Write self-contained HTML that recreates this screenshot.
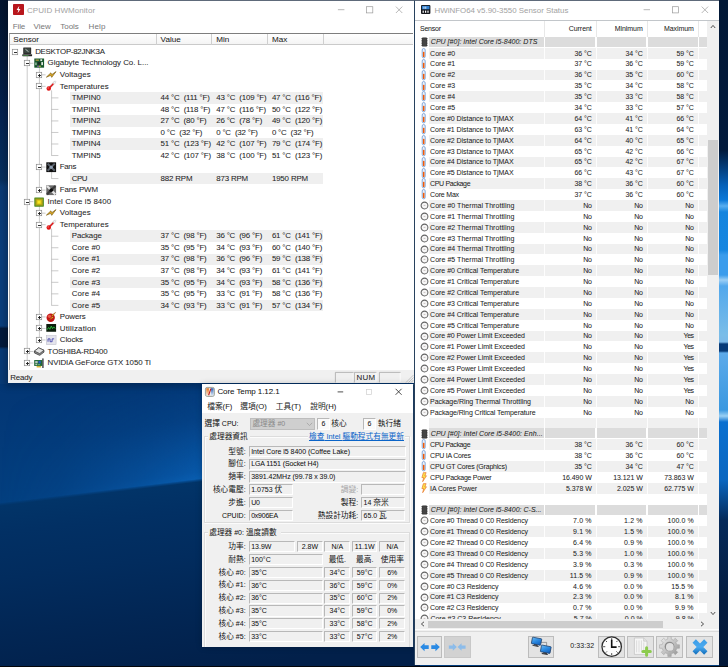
<!DOCTYPE html>
<html lang="zh-Hant"><head><meta charset="utf-8"><title>Sensors</title>
<style>
html,body{margin:0;padding:0;}
body{width:728px;height:667px;overflow:hidden;background:#03346c;font-family:"Liberation Sans","Noto Sans CJK TC",sans-serif;}
#root{position:relative;width:728px;height:667px;overflow:hidden;}
#root div{position:absolute;box-sizing:border-box;}
.t{white-space:pre;-webkit-text-stroke:0.05px currentColor;font-family:"Liberation Sans","Noto Sans CJK TC",sans-serif;}
.c{font-size:7.7px;-webkit-text-stroke:0;}
svg{position:absolute;overflow:visible;}
#bg{left:0;top:0;width:728px;height:667px;background:linear-gradient(180deg,#021a3c 0px,#022350 120px,#03306a 260px,#033674 383px,#033a79 440px,#033f7f 505px);}
#beam{left:0;top:383px;width:420px;height:284px;overflow:hidden;}
#beamhi{left:0;top:0;width:420px;height:140px;background:linear-gradient(173.1deg,rgba(10,100,190,0) 10px,rgba(10,100,190,0.22) 60px,rgba(12,110,205,0.6) 112px,rgba(14,116,210,0.75) 124px);-webkit-mask-image:linear-gradient(90deg,rgba(0,0,0,0.0),rgba(0,0,0,0.14) 60px,rgba(0,0,0,0.55) 140px,#000 215px);mask-image:linear-gradient(90deg,rgba(0,0,0,0.0),rgba(0,0,0,0.14) 60px,rgba(0,0,0,0.55) 140px,#000 215px);}
#beamlo{left:-60px;top:127.3px;width:620px;height:420px;transform-origin:0 0;transform:rotate(-6.9deg);background:linear-gradient(180deg,rgba(2,52,104,0) 0px,rgba(2,52,104,0.55) 1.5px,#023468 3.2px,#023064 30px,#022c5e 75px,#022654 130px,#02204a 190px);}
#rstrip{left:719px;top:0;width:9px;height:667px;background:linear-gradient(180deg,#021836 0px,#021a3c 150px,#0560b8 185px,#0a78d8 200px,#58aef0 206px,#1484de 212px,#1686e0 250px,#3a9cec 255px,#3a9cec 275px,#9ccff5 280px,#52a8ec 286px,#7abde8 335px,#7ab8e8 342px,#063a78 344px,#063a78 351px,#5caaea 353px,#3a98e0 410px,#9ad0f4 416px,#0a70d0 422px,#0a66c0 480px,#052a5a 520px,#041c40 600px,#031838 666px);}
#lstrip{left:0;top:0;width:8.6px;height:384px;background:linear-gradient(180deg,#03142e 0px,#041a3c 60px,#052452 120px,#07305f 180px,#0a3a74 187px,#0a3e7c 250px,#0a3e7c 326px,#031a3c 328.5px,#031a3c 346.5px,#083a76 349px,#083a76 384px);}
#botbar{left:0;top:665.7px;width:728px;height:2px;background:#04060a;}
.hw .t{-webkit-text-stroke:0.04px currentColor;}
.ct .t{-webkit-text-stroke:0.04px currentColor;}
.ct .c{-webkit-text-stroke:0;}

</style></head><body>
<div id="root">
<div id="bg"></div>
<div id="beam"><div id="beamhi"></div><div id="beamlo"></div></div>
<div id="rstrip"></div>
<div id="lstrip"></div>
<div id="botbar"></div>
<div style="left:5.20px;top:0.00px;width:412.10px;height:387.10px;background:rgba(0,0,0,0.22);filter:blur(3px);"></div>
<div style="left:8.20px;top:0.00px;width:406.10px;height:383.10px;background:#fff;border-top:0.8px solid #5e6a7a;"></div>
<svg style="left:13.2px;top:4.4px" width="11" height="11" viewBox="0 0 11 11"><rect x="0" y="0" width="11" height="11" rx="0.8" fill="#b8161c"/><path d="M6.3 1.8 L3.6 6 L5.4 6 L4.6 9.3 L7.5 4.9 L5.7 4.9 Z" fill="#fff"/></svg>
<div class="t" style="left:27.00px;top:4.60px;height:12px;line-height:12px;font-size:8.0px;color:#a2a2a2;letter-spacing:0.070px;-webkit-text-stroke:0;">CPUID HWMonitor</div>
<svg style="left:335px;top:4px" width="72" height="12" viewBox="0 0 72 12"><g stroke="#9a9a9a" stroke-width="0.7" fill="none"><path d="M2.9 5.7 H9.4"/><rect x="31.6" y="2.7" width="6.2" height="6.2"/><path d="M60.9 2.6 L67.3 9 M67.3 2.6 L60.9 9"/></g></svg>
<div class="t" style="left:12.80px;top:20.60px;height:12px;line-height:12px;font-size:8.0px;color:#777777;letter-spacing:-0.158px;-webkit-text-stroke:0;">File</div>
<div class="t" style="left:33.60px;top:20.60px;height:12px;line-height:12px;font-size:8.0px;color:#777777;letter-spacing:-0.014px;-webkit-text-stroke:0;">View</div>
<div class="t" style="left:60.30px;top:20.60px;height:12px;line-height:12px;font-size:8.0px;color:#777777;letter-spacing:-0.038px;-webkit-text-stroke:0;">Tools</div>
<div class="t" style="left:88.60px;top:20.60px;height:12px;line-height:12px;font-size:8.0px;color:#777777;letter-spacing:0.116px;-webkit-text-stroke:0;">Help</div>
<div style="left:9.30px;top:33.00px;width:403.30px;height:337.40px;background:#fff;border-top:1px solid #7e7e7e;border-left:1px solid #a4a4a4;"></div>
<div style="left:10.30px;top:34.00px;width:402.30px;height:11.40px;background:linear-gradient(180deg,#ffffff,#f4f4f4);border-bottom:1px solid #cacaca;"></div>
<div style="left:155.60px;top:34.20px;width:0.90px;height:10.60px;background:#cfcfcf;"></div>
<div style="left:211.40px;top:34.20px;width:0.90px;height:10.60px;background:#cfcfcf;"></div>
<div style="left:267.10px;top:34.20px;width:0.90px;height:10.60px;background:#cfcfcf;"></div>
<div style="left:322.90px;top:34.20px;width:0.90px;height:10.60px;background:#cfcfcf;"></div>
<div class="t" style="left:13.30px;top:34.30px;height:12px;line-height:12px;font-size:8.1px;color:#222;">Sensor</div>
<div class="t" style="left:160.60px;top:34.30px;height:12px;line-height:12px;font-size:8.1px;color:#222;">Value</div>
<div class="t" style="left:216.20px;top:34.30px;height:12px;line-height:12px;font-size:8.1px;color:#222;">Min</div>
<div class="t" style="left:271.90px;top:34.30px;height:12px;line-height:12px;font-size:8.1px;color:#222;">Max</div>
<div style="left:70.10px;top:92.11px;width:252.90px;height:11.53px;background:#efefef;"></div>
<div style="left:70.10px;top:115.17px;width:252.90px;height:11.53px;background:#efefef;"></div>
<div style="left:70.10px;top:138.22px;width:252.90px;height:11.53px;background:#efefef;"></div>
<div style="left:70.10px;top:172.81px;width:252.90px;height:11.53px;background:#efefef;"></div>
<div style="left:70.10px;top:230.45px;width:252.90px;height:11.53px;background:#efefef;"></div>
<div style="left:70.10px;top:253.50px;width:252.90px;height:11.53px;background:#efefef;"></div>
<div style="left:70.10px;top:276.56px;width:252.90px;height:11.53px;background:#efefef;"></div>
<div style="left:70.10px;top:299.62px;width:252.90px;height:11.53px;background:#efefef;"></div>
<svg style="left:0;top:0" width="420" height="384" viewBox="0 0 420 384"><path d="M27.20 55.76 V363.02 M39.40 67.29 V190.10 M39.40 205.63 V339.96 M51.60 90.35 V155.52 M51.60 171.04 V178.57 M51.60 228.68 V305.38 M26.90 63.29 H33.40 M39.10 74.82 H45.60 M39.10 86.35 H45.60 M51.30 97.88 H58.40 M51.30 109.40 H58.40 M51.30 120.93 H58.40 M51.30 132.46 H58.40 M51.30 143.99 H58.40 M51.30 155.52 H58.40 M39.10 167.04 H45.60 M51.30 178.57 H58.40 M39.10 190.10 H45.60 M26.90 201.63 H33.40 M39.10 213.16 H45.60 M39.10 224.68 H45.60 M51.30 236.21 H58.40 M51.30 247.74 H58.40 M51.30 259.27 H58.40 M51.30 270.80 H58.40 M51.30 282.32 H58.40 M51.30 293.85 H58.40 M51.30 305.38 H58.40 M39.10 316.91 H45.60 M39.10 328.44 H45.60 M39.10 339.96 H45.60 M26.90 351.49 H33.40 M26.90 363.02 H33.40" stroke="#b8b8b8" stroke-width="0.75" fill="none"/></svg>
<svg style="left:11.70px;top:48.76px" width="6" height="6" viewBox="0 0 6 6"><rect x="0.3" y="0.3" width="5.4" height="5.4" fill="#fff" stroke="#8a8a8a" stroke-width="0.7"/><path d="M1.5 3 H4.5" stroke="#1c1c1c" stroke-width="0.9" shape-rendering="crispEdges"/></svg>
<svg style="left:21.70px;top:46.66px" width="10.2" height="10.2" viewBox="0 0 10 10"><rect x="1.2" y="0.4" width="7.8" height="6.4" rx="0.5" fill="#2c2c2c"/><rect x="2.2" y="1.3" width="5.8" height="4.4" fill="#3d4a44"/><path d="M3.4 2.2 L6.4 4.6" stroke="#c8d0cc" stroke-width="0.9"/><rect x="0.3" y="7.1" width="9.6" height="2" rx="0.4" fill="#242424"/><rect x="1" y="8.2" width="5.4" height="0.7" fill="#58a858"/></svg>
<div class="t" style="left:35.20px;top:45.96px;height:12px;line-height:12px;font-size:7.9px;color:#1e1e1e;letter-spacing:-0.269px;">DESKTOP-82JNK3A</div>
<svg style="left:23.90px;top:60.29px" width="6" height="6" viewBox="0 0 6 6"><rect x="0.3" y="0.3" width="5.4" height="5.4" fill="#fff" stroke="#8a8a8a" stroke-width="0.7"/><path d="M1.5 3 H4.5" stroke="#1c1c1c" stroke-width="0.9" shape-rendering="crispEdges"/></svg>
<svg style="left:33.90px;top:58.19px" width="10.2" height="10.2" viewBox="0 0 10 10"><rect x="0.3" y="0.5" width="9.6" height="9" fill="#17572c"/><rect x="1.6" y="1.4" width="3.2" height="1.4" fill="#a89840"/><rect x="6.2" y="1.2" width="1.8" height="1.8" fill="#dfe8df"/><rect x="3.6" y="3.8" width="2.8" height="2.8" fill="#1c2a24"/><rect x="1.2" y="4.4" width="1.4" height="2.6" fill="#9fc0a8"/><rect x="7.2" y="4" width="1.6" height="3" fill="#e8efe8"/><rect x="3.2" y="7.6" width="1.6" height="1" fill="#b860d0"/><rect x="5" y="7.6" width="1.6" height="1" fill="#d8d040"/></svg>
<div class="t" style="left:47.60px;top:57.49px;height:12px;line-height:12px;font-size:7.9px;color:#1e1e1e;letter-spacing:-0.009px;">Gigabyte Technology Co. L...</div>
<svg style="left:36.10px;top:71.82px" width="6" height="6" viewBox="0 0 6 6"><rect x="0.3" y="0.3" width="5.4" height="5.4" fill="#fff" stroke="#8a8a8a" stroke-width="0.7"/><path d="M1.5 3 H4.5" stroke="#1c1c1c" stroke-width="0.9" shape-rendering="crispEdges"/><path d="M3 1.5 V4.5" stroke="#1c1c1c" stroke-width="0.9" shape-rendering="crispEdges"/></svg>
<svg style="left:46.10px;top:69.72px" width="10.2" height="10.2" viewBox="0 0 10 10"><path d="M0.4 7 L4.8 2.8 L5.6 4.6 L9.8 1.6 L5.6 7.2 L4.6 5.2 Z" fill="#e8b020" stroke="#7a5c10" stroke-width="0.7" stroke-linejoin="round"/></svg>
<div class="t" style="left:59.80px;top:69.02px;height:12px;line-height:12px;font-size:7.9px;color:#1e1e1e;letter-spacing:0.086px;">Voltages</div>
<svg style="left:36.10px;top:83.35px" width="6" height="6" viewBox="0 0 6 6"><rect x="0.3" y="0.3" width="5.4" height="5.4" fill="#fff" stroke="#8a8a8a" stroke-width="0.7"/><path d="M1.5 3 H4.5" stroke="#1c1c1c" stroke-width="0.9" shape-rendering="crispEdges"/></svg>
<svg style="left:46.10px;top:81.25px" width="10.2" height="10.2" viewBox="0 0 10 10"><path d="M8.9 0.9 L3.4 6.6" stroke="#c4c4c4" stroke-width="2.3" stroke-linecap="round"/><path d="M8.9 0.9 L3.4 6.6" stroke="#f4f4f4" stroke-width="1.5" stroke-linecap="round"/><path d="M6.8 3.1 L3.2 6.8" stroke="#e01818" stroke-width="1.5" stroke-linecap="round"/><circle cx="2.7" cy="7.4" r="2.2" fill="#e01414"/><circle cx="2.1" cy="6.8" r="0.6" fill="#ff9a9a"/></svg>
<div class="t" style="left:59.80px;top:80.55px;height:12px;line-height:12px;font-size:7.9px;color:#1e1e1e;letter-spacing:0.052px;">Temperatures</div>
<div class="t" style="left:71.80px;top:92.08px;height:12px;line-height:12px;font-size:7.9px;color:#1e1e1e;letter-spacing:0.003px;">TMPIN0</div>
<div class="t" style="left:160.60px;top:92.08px;height:12px;line-height:12px;font-size:7.9px;color:#1e1e1e;letter-spacing:-0.167px;">44 °C  (111 °F)</div>
<div class="t" style="left:216.20px;top:92.08px;height:12px;line-height:12px;font-size:7.9px;color:#1e1e1e;letter-spacing:-0.167px;">43 °C  (109 °F)</div>
<div class="t" style="left:271.90px;top:92.08px;height:12px;line-height:12px;font-size:7.9px;color:#1e1e1e;letter-spacing:-0.167px;">47 °C  (116 °F)</div>
<div class="t" style="left:71.80px;top:103.60px;height:12px;line-height:12px;font-size:7.9px;color:#1e1e1e;letter-spacing:0.003px;">TMPIN1</div>
<div class="t" style="left:160.60px;top:103.60px;height:12px;line-height:12px;font-size:7.9px;color:#1e1e1e;letter-spacing:-0.167px;">48 °C  (118 °F)</div>
<div class="t" style="left:216.20px;top:103.60px;height:12px;line-height:12px;font-size:7.9px;color:#1e1e1e;letter-spacing:-0.167px;">47 °C  (116 °F)</div>
<div class="t" style="left:271.90px;top:103.60px;height:12px;line-height:12px;font-size:7.9px;color:#1e1e1e;letter-spacing:-0.167px;">50 °C  (122 °F)</div>
<div class="t" style="left:71.80px;top:115.13px;height:12px;line-height:12px;font-size:7.9px;color:#1e1e1e;letter-spacing:0.003px;">TMPIN2</div>
<div class="t" style="left:160.60px;top:115.13px;height:12px;line-height:12px;font-size:7.9px;color:#1e1e1e;letter-spacing:-0.175px;">27 °C  (80 °F)</div>
<div class="t" style="left:216.20px;top:115.13px;height:12px;line-height:12px;font-size:7.9px;color:#1e1e1e;letter-spacing:-0.175px;">26 °C  (78 °F)</div>
<div class="t" style="left:271.90px;top:115.13px;height:12px;line-height:12px;font-size:7.9px;color:#1e1e1e;letter-spacing:-0.167px;">49 °C  (120 °F)</div>
<div class="t" style="left:71.80px;top:126.66px;height:12px;line-height:12px;font-size:7.9px;color:#1e1e1e;letter-spacing:0.003px;">TMPIN3</div>
<div class="t" style="left:160.60px;top:126.66px;height:12px;line-height:12px;font-size:7.9px;color:#1e1e1e;letter-spacing:-0.185px;">0 °C  (32 °F)</div>
<div class="t" style="left:216.20px;top:126.66px;height:12px;line-height:12px;font-size:7.9px;color:#1e1e1e;letter-spacing:-0.185px;">0 °C  (32 °F)</div>
<div class="t" style="left:271.90px;top:126.66px;height:12px;line-height:12px;font-size:7.9px;color:#1e1e1e;letter-spacing:-0.185px;">0 °C  (32 °F)</div>
<div class="t" style="left:71.80px;top:138.19px;height:12px;line-height:12px;font-size:7.9px;color:#1e1e1e;letter-spacing:0.003px;">TMPIN4</div>
<div class="t" style="left:160.60px;top:138.19px;height:12px;line-height:12px;font-size:7.9px;color:#1e1e1e;letter-spacing:-0.167px;">51 °C  (123 °F)</div>
<div class="t" style="left:216.20px;top:138.19px;height:12px;line-height:12px;font-size:7.9px;color:#1e1e1e;letter-spacing:-0.167px;">42 °C  (107 °F)</div>
<div class="t" style="left:271.90px;top:138.19px;height:12px;line-height:12px;font-size:7.9px;color:#1e1e1e;letter-spacing:-0.167px;">79 °C  (174 °F)</div>
<div class="t" style="left:71.80px;top:149.72px;height:12px;line-height:12px;font-size:7.9px;color:#1e1e1e;letter-spacing:0.003px;">TMPIN5</div>
<div class="t" style="left:160.60px;top:149.72px;height:12px;line-height:12px;font-size:7.9px;color:#1e1e1e;letter-spacing:-0.167px;">42 °C  (107 °F)</div>
<div class="t" style="left:216.20px;top:149.72px;height:12px;line-height:12px;font-size:7.9px;color:#1e1e1e;letter-spacing:-0.167px;">38 °C  (100 °F)</div>
<div class="t" style="left:271.90px;top:149.72px;height:12px;line-height:12px;font-size:7.9px;color:#1e1e1e;letter-spacing:-0.167px;">51 °C  (123 °F)</div>
<svg style="left:36.10px;top:164.04px" width="6" height="6" viewBox="0 0 6 6"><rect x="0.3" y="0.3" width="5.4" height="5.4" fill="#fff" stroke="#8a8a8a" stroke-width="0.7"/><path d="M1.5 3 H4.5" stroke="#1c1c1c" stroke-width="0.9" shape-rendering="crispEdges"/></svg>
<svg style="left:46.10px;top:161.94px" width="10.2" height="10.2" viewBox="0 0 10 10"><rect x="0.3" y="0.3" width="9.6" height="9.6" fill="#101010"/><path d="M1.6 1.6 L8.6 8.6 M8.6 1.6 L1.6 8.6" stroke="#59606a" stroke-width="2"/><path d="M5.1 0.8 V9.4 M0.8 5.1 H9.4" stroke="#101010" stroke-width="1.1"/><circle cx="5.1" cy="5.1" r="1.7" fill="#8c9cb0"/></svg>
<div class="t" style="left:59.80px;top:161.24px;height:12px;line-height:12px;font-size:7.9px;color:#1e1e1e;letter-spacing:-0.320px;">Fans</div>
<div class="t" style="left:71.80px;top:172.77px;height:12px;line-height:12px;font-size:7.9px;color:#1e1e1e;letter-spacing:-0.460px;">CPU</div>
<div class="t" style="left:160.60px;top:172.77px;height:12px;line-height:12px;font-size:7.9px;color:#1e1e1e;letter-spacing:-0.165px;">882 RPM</div>
<div class="t" style="left:216.20px;top:172.77px;height:12px;line-height:12px;font-size:7.9px;color:#1e1e1e;letter-spacing:-0.165px;">873 RPM</div>
<div class="t" style="left:271.90px;top:172.77px;height:12px;line-height:12px;font-size:7.9px;color:#1e1e1e;letter-spacing:-0.151px;">1950 RPM</div>
<svg style="left:36.10px;top:187.10px" width="6" height="6" viewBox="0 0 6 6"><rect x="0.3" y="0.3" width="5.4" height="5.4" fill="#fff" stroke="#8a8a8a" stroke-width="0.7"/><path d="M1.5 3 H4.5" stroke="#1c1c1c" stroke-width="0.9" shape-rendering="crispEdges"/><path d="M3 1.5 V4.5" stroke="#1c1c1c" stroke-width="0.9" shape-rendering="crispEdges"/></svg>
<svg style="left:46.10px;top:185.00px" width="10.2" height="10.2" viewBox="0 0 10 10"><rect x="0.3" y="0.3" width="9.6" height="9.6" fill="#6c6c6c"/><path d="M1 1 L9.2 9.2" stroke="#e4e4e4" stroke-width="2.2"/><path d="M9.2 1 L1 9.2" stroke="#3c3c3c" stroke-width="2.2"/><circle cx="5.1" cy="5.1" r="1.8" fill="#0c0c0c"/></svg>
<div class="t" style="left:59.80px;top:184.30px;height:12px;line-height:12px;font-size:7.9px;color:#1e1e1e;letter-spacing:-0.116px;">Fans PWM</div>
<svg style="left:23.90px;top:198.63px" width="6" height="6" viewBox="0 0 6 6"><rect x="0.3" y="0.3" width="5.4" height="5.4" fill="#fff" stroke="#8a8a8a" stroke-width="0.7"/><path d="M1.5 3 H4.5" stroke="#1c1c1c" stroke-width="0.9" shape-rendering="crispEdges"/></svg>
<svg style="left:33.90px;top:196.53px" width="10.2" height="10.2" viewBox="0 0 10 10"><rect x="0.3" y="0.5" width="9.4" height="9" rx="0.6" fill="#4c8a20"/><rect x="1.3" y="1.5" width="7.4" height="7" fill="#a8a018"/><rect x="2.6" y="2.8" width="4.8" height="4.4" fill="#d8c418"/><rect x="3.6" y="3.7" width="2.8" height="2.6" fill="#fbe620"/></svg>
<div class="t" style="left:47.60px;top:195.83px;height:12px;line-height:12px;font-size:7.9px;color:#1e1e1e;letter-spacing:0.075px;">Intel Core i5 8400</div>
<svg style="left:36.10px;top:210.16px" width="6" height="6" viewBox="0 0 6 6"><rect x="0.3" y="0.3" width="5.4" height="5.4" fill="#fff" stroke="#8a8a8a" stroke-width="0.7"/><path d="M1.5 3 H4.5" stroke="#1c1c1c" stroke-width="0.9" shape-rendering="crispEdges"/><path d="M3 1.5 V4.5" stroke="#1c1c1c" stroke-width="0.9" shape-rendering="crispEdges"/></svg>
<svg style="left:46.10px;top:208.06px" width="10.2" height="10.2" viewBox="0 0 10 10"><path d="M0.4 7 L4.8 2.8 L5.6 4.6 L9.8 1.6 L5.6 7.2 L4.6 5.2 Z" fill="#e8b020" stroke="#7a5c10" stroke-width="0.7" stroke-linejoin="round"/></svg>
<div class="t" style="left:59.80px;top:207.36px;height:12px;line-height:12px;font-size:7.9px;color:#1e1e1e;letter-spacing:0.086px;">Voltages</div>
<svg style="left:36.10px;top:221.68px" width="6" height="6" viewBox="0 0 6 6"><rect x="0.3" y="0.3" width="5.4" height="5.4" fill="#fff" stroke="#8a8a8a" stroke-width="0.7"/><path d="M1.5 3 H4.5" stroke="#1c1c1c" stroke-width="0.9" shape-rendering="crispEdges"/></svg>
<svg style="left:46.10px;top:219.58px" width="10.2" height="10.2" viewBox="0 0 10 10"><path d="M8.9 0.9 L3.4 6.6" stroke="#c4c4c4" stroke-width="2.3" stroke-linecap="round"/><path d="M8.9 0.9 L3.4 6.6" stroke="#f4f4f4" stroke-width="1.5" stroke-linecap="round"/><path d="M6.8 3.1 L3.2 6.8" stroke="#e01818" stroke-width="1.5" stroke-linecap="round"/><circle cx="2.7" cy="7.4" r="2.2" fill="#e01414"/><circle cx="2.1" cy="6.8" r="0.6" fill="#ff9a9a"/></svg>
<div class="t" style="left:59.80px;top:218.88px;height:12px;line-height:12px;font-size:7.9px;color:#1e1e1e;letter-spacing:0.052px;">Temperatures</div>
<div class="t" style="left:71.80px;top:230.41px;height:12px;line-height:12px;font-size:7.9px;color:#1e1e1e;letter-spacing:-0.118px;">Package</div>
<div class="t" style="left:160.60px;top:230.41px;height:12px;line-height:12px;font-size:7.9px;color:#1e1e1e;letter-spacing:-0.175px;">37 °C  (98 °F)</div>
<div class="t" style="left:216.20px;top:230.41px;height:12px;line-height:12px;font-size:7.9px;color:#1e1e1e;letter-spacing:-0.175px;">36 °C  (96 °F)</div>
<div class="t" style="left:271.90px;top:230.41px;height:12px;line-height:12px;font-size:7.9px;color:#1e1e1e;letter-spacing:-0.167px;">61 °C  (141 °F)</div>
<div class="t" style="left:71.80px;top:241.94px;height:12px;line-height:12px;font-size:7.9px;color:#1e1e1e;letter-spacing:0.061px;">Core #0</div>
<div class="t" style="left:160.60px;top:241.94px;height:12px;line-height:12px;font-size:7.9px;color:#1e1e1e;letter-spacing:-0.175px;">35 °C  (95 °F)</div>
<div class="t" style="left:216.20px;top:241.94px;height:12px;line-height:12px;font-size:7.9px;color:#1e1e1e;letter-spacing:-0.175px;">34 °C  (93 °F)</div>
<div class="t" style="left:271.90px;top:241.94px;height:12px;line-height:12px;font-size:7.9px;color:#1e1e1e;letter-spacing:-0.167px;">60 °C  (140 °F)</div>
<div class="t" style="left:71.80px;top:253.47px;height:12px;line-height:12px;font-size:7.9px;color:#1e1e1e;letter-spacing:0.061px;">Core #1</div>
<div class="t" style="left:160.60px;top:253.47px;height:12px;line-height:12px;font-size:7.9px;color:#1e1e1e;letter-spacing:-0.175px;">37 °C  (98 °F)</div>
<div class="t" style="left:216.20px;top:253.47px;height:12px;line-height:12px;font-size:7.9px;color:#1e1e1e;letter-spacing:-0.175px;">36 °C  (96 °F)</div>
<div class="t" style="left:271.90px;top:253.47px;height:12px;line-height:12px;font-size:7.9px;color:#1e1e1e;letter-spacing:-0.167px;">59 °C  (138 °F)</div>
<div class="t" style="left:71.80px;top:265.00px;height:12px;line-height:12px;font-size:7.9px;color:#1e1e1e;letter-spacing:0.061px;">Core #2</div>
<div class="t" style="left:160.60px;top:265.00px;height:12px;line-height:12px;font-size:7.9px;color:#1e1e1e;letter-spacing:-0.175px;">37 °C  (98 °F)</div>
<div class="t" style="left:216.20px;top:265.00px;height:12px;line-height:12px;font-size:7.9px;color:#1e1e1e;letter-spacing:-0.175px;">34 °C  (93 °F)</div>
<div class="t" style="left:271.90px;top:265.00px;height:12px;line-height:12px;font-size:7.9px;color:#1e1e1e;letter-spacing:-0.167px;">61 °C  (141 °F)</div>
<div class="t" style="left:71.80px;top:276.52px;height:12px;line-height:12px;font-size:7.9px;color:#1e1e1e;letter-spacing:0.061px;">Core #3</div>
<div class="t" style="left:160.60px;top:276.52px;height:12px;line-height:12px;font-size:7.9px;color:#1e1e1e;letter-spacing:-0.175px;">35 °C  (95 °F)</div>
<div class="t" style="left:216.20px;top:276.52px;height:12px;line-height:12px;font-size:7.9px;color:#1e1e1e;letter-spacing:-0.175px;">34 °C  (93 °F)</div>
<div class="t" style="left:271.90px;top:276.52px;height:12px;line-height:12px;font-size:7.9px;color:#1e1e1e;letter-spacing:-0.167px;">58 °C  (136 °F)</div>
<div class="t" style="left:71.80px;top:288.05px;height:12px;line-height:12px;font-size:7.9px;color:#1e1e1e;letter-spacing:0.061px;">Core #4</div>
<div class="t" style="left:160.60px;top:288.05px;height:12px;line-height:12px;font-size:7.9px;color:#1e1e1e;letter-spacing:-0.175px;">35 °C  (95 °F)</div>
<div class="t" style="left:216.20px;top:288.05px;height:12px;line-height:12px;font-size:7.9px;color:#1e1e1e;letter-spacing:-0.175px;">33 °C  (91 °F)</div>
<div class="t" style="left:271.90px;top:288.05px;height:12px;line-height:12px;font-size:7.9px;color:#1e1e1e;letter-spacing:-0.167px;">58 °C  (136 °F)</div>
<div class="t" style="left:71.80px;top:299.58px;height:12px;line-height:12px;font-size:7.9px;color:#1e1e1e;letter-spacing:0.061px;">Core #5</div>
<div class="t" style="left:160.60px;top:299.58px;height:12px;line-height:12px;font-size:7.9px;color:#1e1e1e;letter-spacing:-0.175px;">34 °C  (93 °F)</div>
<div class="t" style="left:216.20px;top:299.58px;height:12px;line-height:12px;font-size:7.9px;color:#1e1e1e;letter-spacing:-0.175px;">33 °C  (91 °F)</div>
<div class="t" style="left:271.90px;top:299.58px;height:12px;line-height:12px;font-size:7.9px;color:#1e1e1e;letter-spacing:-0.167px;">57 °C  (134 °F)</div>
<svg style="left:36.10px;top:313.91px" width="6" height="6" viewBox="0 0 6 6"><rect x="0.3" y="0.3" width="5.4" height="5.4" fill="#fff" stroke="#8a8a8a" stroke-width="0.7"/><path d="M1.5 3 H4.5" stroke="#1c1c1c" stroke-width="0.9" shape-rendering="crispEdges"/><path d="M3 1.5 V4.5" stroke="#1c1c1c" stroke-width="0.9" shape-rendering="crispEdges"/></svg>
<svg style="left:46.10px;top:311.81px" width="10.2" height="10.2" viewBox="0 0 10 10"><circle cx="4.6" cy="5.6" r="4.1" fill="#c41414"/><circle cx="3.4" cy="4.2" r="1.6" fill="#e85a4a"/><path d="M9.4 0.4 L5.4 3.2 L6.6 4.2 L2.6 8.2 L7.4 5.4 L6.2 4.4 Z" fill="#f8c828" stroke="#8a3a08" stroke-width="0.45" stroke-linejoin="round"/></svg>
<div class="t" style="left:59.80px;top:311.11px;height:12px;line-height:12px;font-size:7.9px;color:#1e1e1e;letter-spacing:-0.068px;">Powers</div>
<svg style="left:36.10px;top:325.44px" width="6" height="6" viewBox="0 0 6 6"><rect x="0.3" y="0.3" width="5.4" height="5.4" fill="#fff" stroke="#8a8a8a" stroke-width="0.7"/><path d="M1.5 3 H4.5" stroke="#1c1c1c" stroke-width="0.9" shape-rendering="crispEdges"/><path d="M3 1.5 V4.5" stroke="#1c1c1c" stroke-width="0.9" shape-rendering="crispEdges"/></svg>
<svg style="left:46.10px;top:323.34px" width="10.2" height="10.2" viewBox="0 0 10 10"><rect x="0.3" y="1" width="9.6" height="7.6" fill="#0c1c0c"/><path d="M1 6.6 L2.6 4.4 L3.8 6.2 L5.2 3 L6.4 5.6 L7.6 3.8 L9 5.4" stroke="#30d040" stroke-width="0.8" fill="none"/></svg>
<div class="t" style="left:59.80px;top:322.64px;height:12px;line-height:12px;font-size:7.9px;color:#1e1e1e;letter-spacing:0.200px;">Utilization</div>
<svg style="left:36.10px;top:336.96px" width="6" height="6" viewBox="0 0 6 6"><rect x="0.3" y="0.3" width="5.4" height="5.4" fill="#fff" stroke="#8a8a8a" stroke-width="0.7"/><path d="M1.5 3 H4.5" stroke="#1c1c1c" stroke-width="0.9" shape-rendering="crispEdges"/><path d="M3 1.5 V4.5" stroke="#1c1c1c" stroke-width="0.9" shape-rendering="crispEdges"/></svg>
<svg style="left:46.10px;top:334.86px" width="10.2" height="10.2" viewBox="0 0 10 10"><rect x="0.3" y="0.6" width="9.6" height="8.8" fill="#e4e4ec" stroke="#b8b8c4" stroke-width="0.5"/><path d="M2 6.6 V3.8 H4 V6.6 H6 V3.8 H8" stroke="#3838a8" stroke-width="0.8" fill="none"/></svg>
<div class="t" style="left:59.80px;top:334.16px;height:12px;line-height:12px;font-size:7.9px;color:#1e1e1e;letter-spacing:-0.082px;">Clocks</div>
<svg style="left:23.90px;top:348.49px" width="6" height="6" viewBox="0 0 6 6"><rect x="0.3" y="0.3" width="5.4" height="5.4" fill="#fff" stroke="#8a8a8a" stroke-width="0.7"/><path d="M1.5 3 H4.5" stroke="#1c1c1c" stroke-width="0.9" shape-rendering="crispEdges"/><path d="M3 1.5 V4.5" stroke="#1c1c1c" stroke-width="0.9" shape-rendering="crispEdges"/></svg>
<svg style="left:33.90px;top:346.39px" width="10.2" height="10.2" viewBox="0 0 10 10"><path d="M0.4 5 L4.6 1.8 L9.8 4.2 L9.8 6 L5.6 9.2 L0.4 6.8 Z" fill="#8e8e8e" stroke="#2e2e2e" stroke-width="0.7" stroke-linejoin="round"/><path d="M0.4 5 L4.6 1.8 L9.8 4.2 L5.6 7.4 Z" fill="#e6e6e6" stroke="#2e2e2e" stroke-width="0.6" stroke-linejoin="round"/></svg>
<div class="t" style="left:47.60px;top:345.69px;height:12px;line-height:12px;font-size:7.9px;color:#1e1e1e;letter-spacing:-0.145px;">TOSHIBA-RD400</div>
<svg style="left:23.90px;top:360.02px" width="6" height="6" viewBox="0 0 6 6"><rect x="0.3" y="0.3" width="5.4" height="5.4" fill="#fff" stroke="#8a8a8a" stroke-width="0.7"/><path d="M1.5 3 H4.5" stroke="#1c1c1c" stroke-width="0.9" shape-rendering="crispEdges"/><path d="M3 1.5 V4.5" stroke="#1c1c1c" stroke-width="0.9" shape-rendering="crispEdges"/></svg>
<svg style="left:33.90px;top:357.92px" width="10.2" height="10.2" viewBox="0 0 10 10"><rect x="0.2" y="2" width="8.2" height="5.8" fill="#1f6a34"/><rect x="1.2" y="3" width="2.4" height="2.2" fill="#b8c8c0"/><rect x="4.4" y="2.8" width="2.2" height="2.6" fill="#2a58c8"/><rect x="1.4" y="5.8" width="1.4" height="1.2" fill="#d8d8d8"/><rect x="3.4" y="6" width="2.6" height="1" fill="#6aa878"/><rect x="8" y="0.4" width="1.5" height="9.4" fill="#505458"/><rect x="2.6" y="7.8" width="4.4" height="1.5" fill="#d8b838"/></svg>
<div class="t" style="left:47.60px;top:357.22px;height:12px;line-height:12px;font-size:7.9px;color:#1e1e1e;letter-spacing:-0.087px;">NVIDIA GeForce GTX 1050 Ti</div>
<div style="left:8.20px;top:370.40px;width:406.10px;height:12.70px;background:#f0f0f0;"></div>
<div class="t" style="left:10.30px;top:372.10px;height:12px;line-height:12px;font-size:7.9px;color:#222;letter-spacing:-0.138px;">Ready</div>
<svg style="left:334.60px;top:372.3px" width="18.60" height="10.4" viewBox="0 0 18.60 10.4"><path d="M0.4 10.4 V0.4 H18.60" stroke="#a8a8a8" stroke-width="0.8" fill="none"/><path d="M18.20 0.8 V10 H0.8" stroke="#fff" stroke-width="0.8" fill="none"/></svg>
<svg style="left:354.40px;top:372.3px" width="22.40" height="10.4" viewBox="0 0 22.40 10.4"><path d="M0.4 10.4 V0.4 H22.40" stroke="#a8a8a8" stroke-width="0.8" fill="none"/><path d="M22.00 0.8 V10 H0.8" stroke="#fff" stroke-width="0.8" fill="none"/></svg>
<svg style="left:379.40px;top:372.3px" width="21.60" height="10.4" viewBox="0 0 21.60 10.4"><path d="M0.4 10.4 V0.4 H21.60" stroke="#a8a8a8" stroke-width="0.8" fill="none"/><path d="M21.20 0.8 V10 H0.8" stroke="#fff" stroke-width="0.8" fill="none"/></svg>
<div class="t" style="left:356.40px;top:372.10px;height:12px;line-height:12px;font-size:7.9px;color:#222;letter-spacing:0.379px;">NUM</div>
<svg style="left:404.5px;top:373.8px" width="9" height="9" viewBox="0 0 9 9"><g stroke="#b4b4b4" stroke-width="0.7"><path d="M8.5 1 L1 8.5 M8.5 3.5 L3.5 8.5 M8.5 6 L6 8.5"/></g></svg>
<div class="hw" style="left:0;top:0;width:728px;height:667px;">
<div style="left:414.30px;top:0.00px;width:305.10px;height:665.30px;background:#fff;border-top:0.8px solid #5e6a7a;border-left:1.2px solid #28425e;"></div>
<svg style="left:420.7px;top:5.2px" width="9.4" height="9" viewBox="0 0 9.4 9"><rect x="0" y="0" width="9.4" height="9" rx="1" fill="#15171c"/><rect x="0.9" y="0.9" width="7.6" height="3.4" fill="#2f7fd0"/><rect x="2.6" y="1.6" width="0.8" height="2.2" fill="#fff"/><rect x="4.4" y="1.6" width="0.8" height="2.2" fill="#fff"/><rect x="1.6" y="5.6" width="1.2" height="2.2" fill="#fff"/><rect x="4" y="5.6" width="1.2" height="2.2" fill="#fff"/><rect x="6.4" y="5.6" width="1.2" height="2.2" fill="#fff"/></svg>
<div class="t" style="left:434.60px;top:4.50px;height:12px;line-height:12px;font-size:7.9px;color:#a2a2a2;letter-spacing:-0.001px;-webkit-text-stroke:0;">HWiNFO64 v5.90-3550 Sensor Status</div>
<svg style="left:640px;top:4px" width="72" height="12" viewBox="0 0 72 12"><g stroke="#9a9a9a" stroke-width="0.7" fill="none"><path d="M3.6 5.7 H10"/><rect x="32.4" y="2.7" width="6.2" height="6.2"/><path d="M61.7 2.6 L68.1 9 M68.1 2.6 L61.7 9"/></g></svg>
<div style="left:415.40px;top:20.30px;width:304.00px;height:16.40px;background:#fff;border-top:1px solid #c2c6ca;"></div>
<div style="left:544.00px;top:21.20px;width:0.90px;height:15.40px;background:#e8e8e8;"></div>
<div style="left:595.60px;top:21.20px;width:0.90px;height:15.40px;background:#e8e8e8;"></div>
<div style="left:646.60px;top:21.20px;width:0.90px;height:15.40px;background:#e8e8e8;"></div>
<div style="left:697.90px;top:21.20px;width:0.90px;height:15.40px;background:#e8e8e8;"></div>
<div class="t" style="left:420.00px;top:23.00px;height:12px;line-height:12px;font-size:7.0px;color:#222;letter-spacing:-0.227px;">Sensor</div>
<div class="t" style="right:136.30px;top:23.00px;height:12px;line-height:12px;font-size:7.0px;color:#222;letter-spacing:-0.056px;">Current</div>
<div class="t" style="right:85.30px;top:23.00px;height:12px;line-height:12px;font-size:7.0px;color:#222;letter-spacing:-0.056px;">Minimum</div>
<div class="t" style="right:34.30px;top:23.00px;height:12px;line-height:12px;font-size:7.0px;color:#222;letter-spacing:-0.099px;">Maximum</div>
<div style="left:415.40px;top:36.7px;width:292.00px;height:582.00px;overflow:hidden;background:#fff;"></div>
<div style="left:429.30px;top:36.90px;width:278.10px;height:9.98px;background:#dcdcdc;"></div>
<div style="left:429.30px;top:47.78px;width:278.10px;height:10.88px;background:#f0f0f0;"></div>
<div style="left:429.30px;top:69.53px;width:278.10px;height:10.88px;background:#f0f0f0;"></div>
<div style="left:429.30px;top:91.28px;width:278.10px;height:10.88px;background:#f0f0f0;"></div>
<div style="left:429.30px;top:113.04px;width:278.10px;height:10.88px;background:#f0f0f0;"></div>
<div style="left:429.30px;top:134.79px;width:278.10px;height:10.88px;background:#f0f0f0;"></div>
<div style="left:429.30px;top:156.55px;width:278.10px;height:10.88px;background:#f0f0f0;"></div>
<div style="left:429.30px;top:178.30px;width:278.10px;height:10.88px;background:#f0f0f0;"></div>
<div style="left:429.30px;top:200.06px;width:278.10px;height:10.88px;background:#f0f0f0;"></div>
<div style="left:429.30px;top:221.81px;width:278.10px;height:10.88px;background:#f0f0f0;"></div>
<div style="left:429.30px;top:243.56px;width:278.10px;height:10.88px;background:#f0f0f0;"></div>
<div style="left:429.30px;top:265.32px;width:278.10px;height:10.88px;background:#f0f0f0;"></div>
<div style="left:429.30px;top:287.07px;width:278.10px;height:10.88px;background:#f0f0f0;"></div>
<div style="left:429.30px;top:308.82px;width:278.10px;height:10.88px;background:#f0f0f0;"></div>
<div style="left:429.30px;top:330.58px;width:278.10px;height:10.88px;background:#f0f0f0;"></div>
<div style="left:429.30px;top:352.33px;width:278.10px;height:10.88px;background:#f0f0f0;"></div>
<div style="left:429.30px;top:374.09px;width:278.10px;height:10.88px;background:#f0f0f0;"></div>
<div style="left:429.30px;top:395.84px;width:278.10px;height:10.88px;background:#f0f0f0;"></div>
<div style="left:429.30px;top:417.60px;width:278.10px;height:10.88px;background:#f0f0f0;"></div>
<div style="left:429.30px;top:428.47px;width:278.10px;height:9.98px;background:#dcdcdc;"></div>
<div style="left:429.30px;top:439.35px;width:278.10px;height:10.88px;background:#f0f0f0;"></div>
<div style="left:429.30px;top:461.10px;width:278.10px;height:10.88px;background:#f0f0f0;"></div>
<div style="left:429.30px;top:482.86px;width:278.10px;height:10.88px;background:#f0f0f0;"></div>
<div style="left:429.30px;top:504.61px;width:278.10px;height:9.98px;background:#dcdcdc;"></div>
<div style="left:429.30px;top:526.37px;width:278.10px;height:10.88px;background:#f0f0f0;"></div>
<div style="left:429.30px;top:548.12px;width:278.10px;height:10.88px;background:#f0f0f0;"></div>
<div style="left:429.30px;top:569.87px;width:278.10px;height:10.88px;background:#f0f0f0;"></div>
<div style="left:429.30px;top:591.63px;width:278.10px;height:10.88px;background:#f0f0f0;"></div>
<div style="left:429.30px;top:613.38px;width:278.10px;height:5.32px;background:#f0f0f0;"></div>
<div style="left:544.00px;top:36.70px;width:0.80px;height:582.00px;background:rgba(255,255,255,0.85);"></div>
<div style="left:543.60px;top:36.90px;width:1.70px;height:10.88px;background:#fff;"></div>
<div style="left:543.60px;top:428.47px;width:1.70px;height:10.88px;background:#fff;"></div>
<div style="left:543.60px;top:504.61px;width:1.70px;height:10.88px;background:#fff;"></div>
<div style="left:595.60px;top:36.70px;width:0.80px;height:582.00px;background:rgba(255,255,255,0.85);"></div>
<div style="left:595.20px;top:36.90px;width:1.70px;height:10.88px;background:#fff;"></div>
<div style="left:595.20px;top:428.47px;width:1.70px;height:10.88px;background:#fff;"></div>
<div style="left:595.20px;top:504.61px;width:1.70px;height:10.88px;background:#fff;"></div>
<div style="left:646.60px;top:36.70px;width:0.80px;height:582.00px;background:rgba(255,255,255,0.85);"></div>
<div style="left:646.20px;top:36.90px;width:1.70px;height:10.88px;background:#fff;"></div>
<div style="left:646.20px;top:428.47px;width:1.70px;height:10.88px;background:#fff;"></div>
<div style="left:646.20px;top:504.61px;width:1.70px;height:10.88px;background:#fff;"></div>
<div style="left:697.90px;top:36.70px;width:0.80px;height:582.00px;background:rgba(255,255,255,0.85);"></div>
<div style="left:697.50px;top:36.90px;width:1.70px;height:10.88px;background:#fff;"></div>
<div style="left:697.50px;top:428.47px;width:1.70px;height:10.88px;background:#fff;"></div>
<div style="left:697.50px;top:504.61px;width:1.70px;height:10.88px;background:#fff;"></div>
<svg style="left:420.7px;top:37.14px" width="7" height="10" viewBox="0 0 7 10"><g stroke="#6a6a6a" stroke-width="0.7"><path d="M0 1.6 H7 M0 3.3 H7 M0 5 H7 M0 6.7 H7 M0 8.4 H7"/></g><rect x="1.1" y="0.5" width="4.8" height="9" rx="0.5" fill="#2e2e2e"/><rect x="1.8" y="1.2" width="3.4" height="7.6" fill="#454545"/></svg>
<div class="t" style="left:430.80px;top:36.44px;height:12px;line-height:12px;font-size:7.0px;color:#222;letter-spacing:0.023px;font-style:italic;">CPU [#0]: Intel Core i5-8400: DTS</div>
<svg style="left:421.2px;top:47.92px" width="5.4" height="10.4" viewBox="0 0 5.4 10.4"><rect x="1.2" y="0.5" width="3.0" height="9.4" rx="1.5" fill="#eaf1fa" stroke="#7aa2d6" stroke-width="0.9"/><rect x="1.95" y="3.8" width="1.5" height="5.2" rx="0.6" fill="#f25a06"/></svg>
<div class="t" style="left:430.10px;top:47.62px;height:12px;line-height:12px;font-size:7.0px;color:#222;letter-spacing:0.038px;">Core #0</div>
<div class="t" style="right:136.30px;top:47.62px;height:12px;line-height:12px;font-size:7.0px;color:#222;letter-spacing:-0.070px;">36 °C</div>
<div class="t" style="right:85.30px;top:47.62px;height:12px;line-height:12px;font-size:7.0px;color:#222;letter-spacing:-0.070px;">34 °C</div>
<div class="t" style="right:34.30px;top:47.62px;height:12px;line-height:12px;font-size:7.0px;color:#222;letter-spacing:-0.070px;">59 °C</div>
<svg style="left:421.2px;top:58.79px" width="5.4" height="10.4" viewBox="0 0 5.4 10.4"><rect x="1.2" y="0.5" width="3.0" height="9.4" rx="1.5" fill="#eaf1fa" stroke="#7aa2d6" stroke-width="0.9"/><rect x="1.95" y="3.8" width="1.5" height="5.2" rx="0.6" fill="#f25a06"/></svg>
<div class="t" style="left:430.10px;top:58.49px;height:12px;line-height:12px;font-size:7.0px;color:#222;letter-spacing:0.038px;">Core #1</div>
<div class="t" style="right:136.30px;top:58.49px;height:12px;line-height:12px;font-size:7.0px;color:#222;letter-spacing:-0.070px;">37 °C</div>
<div class="t" style="right:85.30px;top:58.49px;height:12px;line-height:12px;font-size:7.0px;color:#222;letter-spacing:-0.070px;">36 °C</div>
<div class="t" style="right:34.30px;top:58.49px;height:12px;line-height:12px;font-size:7.0px;color:#222;letter-spacing:-0.070px;">59 °C</div>
<svg style="left:421.2px;top:69.67px" width="5.4" height="10.4" viewBox="0 0 5.4 10.4"><rect x="1.2" y="0.5" width="3.0" height="9.4" rx="1.5" fill="#eaf1fa" stroke="#7aa2d6" stroke-width="0.9"/><rect x="1.95" y="3.8" width="1.5" height="5.2" rx="0.6" fill="#f25a06"/></svg>
<div class="t" style="left:430.10px;top:69.37px;height:12px;line-height:12px;font-size:7.0px;color:#222;letter-spacing:0.038px;">Core #2</div>
<div class="t" style="right:136.30px;top:69.37px;height:12px;line-height:12px;font-size:7.0px;color:#222;letter-spacing:-0.070px;">36 °C</div>
<div class="t" style="right:85.30px;top:69.37px;height:12px;line-height:12px;font-size:7.0px;color:#222;letter-spacing:-0.070px;">35 °C</div>
<div class="t" style="right:34.30px;top:69.37px;height:12px;line-height:12px;font-size:7.0px;color:#222;letter-spacing:-0.070px;">60 °C</div>
<svg style="left:421.2px;top:80.55px" width="5.4" height="10.4" viewBox="0 0 5.4 10.4"><rect x="1.2" y="0.5" width="3.0" height="9.4" rx="1.5" fill="#eaf1fa" stroke="#7aa2d6" stroke-width="0.9"/><rect x="1.95" y="3.8" width="1.5" height="5.2" rx="0.6" fill="#f25a06"/></svg>
<div class="t" style="left:430.10px;top:80.25px;height:12px;line-height:12px;font-size:7.0px;color:#222;letter-spacing:0.038px;">Core #3</div>
<div class="t" style="right:136.30px;top:80.25px;height:12px;line-height:12px;font-size:7.0px;color:#222;letter-spacing:-0.070px;">35 °C</div>
<div class="t" style="right:85.30px;top:80.25px;height:12px;line-height:12px;font-size:7.0px;color:#222;letter-spacing:-0.070px;">34 °C</div>
<div class="t" style="right:34.30px;top:80.25px;height:12px;line-height:12px;font-size:7.0px;color:#222;letter-spacing:-0.070px;">58 °C</div>
<svg style="left:421.2px;top:91.42px" width="5.4" height="10.4" viewBox="0 0 5.4 10.4"><rect x="1.2" y="0.5" width="3.0" height="9.4" rx="1.5" fill="#eaf1fa" stroke="#7aa2d6" stroke-width="0.9"/><rect x="1.95" y="3.8" width="1.5" height="5.2" rx="0.6" fill="#f25a06"/></svg>
<div class="t" style="left:430.10px;top:91.12px;height:12px;line-height:12px;font-size:7.0px;color:#222;letter-spacing:0.038px;">Core #4</div>
<div class="t" style="right:136.30px;top:91.12px;height:12px;line-height:12px;font-size:7.0px;color:#222;letter-spacing:-0.070px;">35 °C</div>
<div class="t" style="right:85.30px;top:91.12px;height:12px;line-height:12px;font-size:7.0px;color:#222;letter-spacing:-0.070px;">33 °C</div>
<div class="t" style="right:34.30px;top:91.12px;height:12px;line-height:12px;font-size:7.0px;color:#222;letter-spacing:-0.070px;">58 °C</div>
<svg style="left:421.2px;top:102.30px" width="5.4" height="10.4" viewBox="0 0 5.4 10.4"><rect x="1.2" y="0.5" width="3.0" height="9.4" rx="1.5" fill="#eaf1fa" stroke="#7aa2d6" stroke-width="0.9"/><rect x="1.95" y="3.8" width="1.5" height="5.2" rx="0.6" fill="#f25a06"/></svg>
<div class="t" style="left:430.10px;top:102.00px;height:12px;line-height:12px;font-size:7.0px;color:#222;letter-spacing:0.038px;">Core #5</div>
<div class="t" style="right:136.30px;top:102.00px;height:12px;line-height:12px;font-size:7.0px;color:#222;letter-spacing:-0.070px;">34 °C</div>
<div class="t" style="right:85.30px;top:102.00px;height:12px;line-height:12px;font-size:7.0px;color:#222;letter-spacing:-0.070px;">33 °C</div>
<div class="t" style="right:34.30px;top:102.00px;height:12px;line-height:12px;font-size:7.0px;color:#222;letter-spacing:-0.070px;">57 °C</div>
<svg style="left:421.2px;top:113.18px" width="5.4" height="10.4" viewBox="0 0 5.4 10.4"><rect x="1.2" y="0.5" width="3.0" height="9.4" rx="1.5" fill="#eaf1fa" stroke="#7aa2d6" stroke-width="0.9"/><rect x="1.95" y="3.8" width="1.5" height="5.2" rx="0.6" fill="#f25a06"/></svg>
<div class="t" style="left:430.10px;top:112.88px;height:12px;line-height:12px;font-size:7.0px;color:#222;letter-spacing:-0.049px;">Core #0 Distance to TjMAX</div>
<div class="t" style="right:136.30px;top:112.88px;height:12px;line-height:12px;font-size:7.0px;color:#222;letter-spacing:-0.070px;">64 °C</div>
<div class="t" style="right:85.30px;top:112.88px;height:12px;line-height:12px;font-size:7.0px;color:#222;letter-spacing:-0.070px;">41 °C</div>
<div class="t" style="right:34.30px;top:112.88px;height:12px;line-height:12px;font-size:7.0px;color:#222;letter-spacing:-0.070px;">66 °C</div>
<svg style="left:421.2px;top:124.05px" width="5.4" height="10.4" viewBox="0 0 5.4 10.4"><rect x="1.2" y="0.5" width="3.0" height="9.4" rx="1.5" fill="#eaf1fa" stroke="#7aa2d6" stroke-width="0.9"/><rect x="1.95" y="3.8" width="1.5" height="5.2" rx="0.6" fill="#f25a06"/></svg>
<div class="t" style="left:430.10px;top:123.75px;height:12px;line-height:12px;font-size:7.0px;color:#222;letter-spacing:-0.049px;">Core #1 Distance to TjMAX</div>
<div class="t" style="right:136.30px;top:123.75px;height:12px;line-height:12px;font-size:7.0px;color:#222;letter-spacing:-0.070px;">63 °C</div>
<div class="t" style="right:85.30px;top:123.75px;height:12px;line-height:12px;font-size:7.0px;color:#222;letter-spacing:-0.070px;">41 °C</div>
<div class="t" style="right:34.30px;top:123.75px;height:12px;line-height:12px;font-size:7.0px;color:#222;letter-spacing:-0.070px;">64 °C</div>
<svg style="left:421.2px;top:134.93px" width="5.4" height="10.4" viewBox="0 0 5.4 10.4"><rect x="1.2" y="0.5" width="3.0" height="9.4" rx="1.5" fill="#eaf1fa" stroke="#7aa2d6" stroke-width="0.9"/><rect x="1.95" y="3.8" width="1.5" height="5.2" rx="0.6" fill="#f25a06"/></svg>
<div class="t" style="left:430.10px;top:134.63px;height:12px;line-height:12px;font-size:7.0px;color:#222;letter-spacing:-0.049px;">Core #2 Distance to TjMAX</div>
<div class="t" style="right:136.30px;top:134.63px;height:12px;line-height:12px;font-size:7.0px;color:#222;letter-spacing:-0.070px;">64 °C</div>
<div class="t" style="right:85.30px;top:134.63px;height:12px;line-height:12px;font-size:7.0px;color:#222;letter-spacing:-0.070px;">40 °C</div>
<div class="t" style="right:34.30px;top:134.63px;height:12px;line-height:12px;font-size:7.0px;color:#222;letter-spacing:-0.070px;">65 °C</div>
<svg style="left:421.2px;top:145.81px" width="5.4" height="10.4" viewBox="0 0 5.4 10.4"><rect x="1.2" y="0.5" width="3.0" height="9.4" rx="1.5" fill="#eaf1fa" stroke="#7aa2d6" stroke-width="0.9"/><rect x="1.95" y="3.8" width="1.5" height="5.2" rx="0.6" fill="#f25a06"/></svg>
<div class="t" style="left:430.10px;top:145.51px;height:12px;line-height:12px;font-size:7.0px;color:#222;letter-spacing:-0.049px;">Core #3 Distance to TjMAX</div>
<div class="t" style="right:136.30px;top:145.51px;height:12px;line-height:12px;font-size:7.0px;color:#222;letter-spacing:-0.070px;">65 °C</div>
<div class="t" style="right:85.30px;top:145.51px;height:12px;line-height:12px;font-size:7.0px;color:#222;letter-spacing:-0.070px;">42 °C</div>
<div class="t" style="right:34.30px;top:145.51px;height:12px;line-height:12px;font-size:7.0px;color:#222;letter-spacing:-0.070px;">66 °C</div>
<svg style="left:421.2px;top:156.69px" width="5.4" height="10.4" viewBox="0 0 5.4 10.4"><rect x="1.2" y="0.5" width="3.0" height="9.4" rx="1.5" fill="#eaf1fa" stroke="#7aa2d6" stroke-width="0.9"/><rect x="1.95" y="3.8" width="1.5" height="5.2" rx="0.6" fill="#f25a06"/></svg>
<div class="t" style="left:430.10px;top:156.39px;height:12px;line-height:12px;font-size:7.0px;color:#222;letter-spacing:-0.049px;">Core #4 Distance to TjMAX</div>
<div class="t" style="right:136.30px;top:156.39px;height:12px;line-height:12px;font-size:7.0px;color:#222;letter-spacing:-0.070px;">65 °C</div>
<div class="t" style="right:85.30px;top:156.39px;height:12px;line-height:12px;font-size:7.0px;color:#222;letter-spacing:-0.070px;">42 °C</div>
<div class="t" style="right:34.30px;top:156.39px;height:12px;line-height:12px;font-size:7.0px;color:#222;letter-spacing:-0.070px;">67 °C</div>
<svg style="left:421.2px;top:167.56px" width="5.4" height="10.4" viewBox="0 0 5.4 10.4"><rect x="1.2" y="0.5" width="3.0" height="9.4" rx="1.5" fill="#eaf1fa" stroke="#7aa2d6" stroke-width="0.9"/><rect x="1.95" y="3.8" width="1.5" height="5.2" rx="0.6" fill="#f25a06"/></svg>
<div class="t" style="left:430.10px;top:167.26px;height:12px;line-height:12px;font-size:7.0px;color:#222;letter-spacing:-0.049px;">Core #5 Distance to TjMAX</div>
<div class="t" style="right:136.30px;top:167.26px;height:12px;line-height:12px;font-size:7.0px;color:#222;letter-spacing:-0.070px;">66 °C</div>
<div class="t" style="right:85.30px;top:167.26px;height:12px;line-height:12px;font-size:7.0px;color:#222;letter-spacing:-0.070px;">43 °C</div>
<div class="t" style="right:34.30px;top:167.26px;height:12px;line-height:12px;font-size:7.0px;color:#222;letter-spacing:-0.070px;">67 °C</div>
<svg style="left:421.2px;top:178.44px" width="5.4" height="10.4" viewBox="0 0 5.4 10.4"><rect x="1.2" y="0.5" width="3.0" height="9.4" rx="1.5" fill="#eaf1fa" stroke="#7aa2d6" stroke-width="0.9"/><rect x="1.95" y="3.8" width="1.5" height="5.2" rx="0.6" fill="#f25a06"/></svg>
<div class="t" style="left:430.10px;top:178.14px;height:12px;line-height:12px;font-size:7.0px;color:#222;letter-spacing:-0.352px;">CPU Package</div>
<div class="t" style="right:136.30px;top:178.14px;height:12px;line-height:12px;font-size:7.0px;color:#222;letter-spacing:-0.070px;">38 °C</div>
<div class="t" style="right:85.30px;top:178.14px;height:12px;line-height:12px;font-size:7.0px;color:#222;letter-spacing:-0.070px;">36 °C</div>
<div class="t" style="right:34.30px;top:178.14px;height:12px;line-height:12px;font-size:7.0px;color:#222;letter-spacing:-0.070px;">60 °C</div>
<svg style="left:421.2px;top:189.32px" width="5.4" height="10.4" viewBox="0 0 5.4 10.4"><rect x="1.2" y="0.5" width="3.0" height="9.4" rx="1.5" fill="#eaf1fa" stroke="#7aa2d6" stroke-width="0.9"/><rect x="1.95" y="3.8" width="1.5" height="5.2" rx="0.6" fill="#f25a06"/></svg>
<div class="t" style="left:430.10px;top:189.02px;height:12px;line-height:12px;font-size:7.0px;color:#222;letter-spacing:-0.194px;">Core Max</div>
<div class="t" style="right:136.30px;top:189.02px;height:12px;line-height:12px;font-size:7.0px;color:#222;letter-spacing:-0.070px;">37 °C</div>
<div class="t" style="right:85.30px;top:189.02px;height:12px;line-height:12px;font-size:7.0px;color:#222;letter-spacing:-0.070px;">36 °C</div>
<div class="t" style="right:34.30px;top:189.02px;height:12px;line-height:12px;font-size:7.0px;color:#222;letter-spacing:-0.070px;">60 °C</div>
<svg style="left:419.6px;top:200.99px" width="9" height="9" viewBox="0 0 9 9"><circle cx="4.5" cy="4.5" r="3.4" fill="#f6f6f6" stroke="#626262" stroke-width="1.05"/><path d="M3.6 4.4 H5.4" stroke="#a89a9a" stroke-width="0.6"/></svg>
<div class="t" style="left:430.10px;top:199.89px;height:12px;line-height:12px;font-size:7.0px;color:#222;letter-spacing:0.035px;">Core #0 Thermal Throttling</div>
<div class="t" style="right:136.30px;top:199.89px;height:12px;line-height:12px;font-size:7.0px;color:#222;letter-spacing:-0.262px;">No</div>
<div class="t" style="right:85.30px;top:199.89px;height:12px;line-height:12px;font-size:7.0px;color:#222;letter-spacing:-0.262px;">No</div>
<div class="t" style="right:34.30px;top:199.89px;height:12px;line-height:12px;font-size:7.0px;color:#222;letter-spacing:-0.262px;">No</div>
<svg style="left:419.6px;top:211.87px" width="9" height="9" viewBox="0 0 9 9"><circle cx="4.5" cy="4.5" r="3.4" fill="#f6f6f6" stroke="#626262" stroke-width="1.05"/><path d="M3.6 4.4 H5.4" stroke="#a89a9a" stroke-width="0.6"/></svg>
<div class="t" style="left:430.10px;top:210.77px;height:12px;line-height:12px;font-size:7.0px;color:#222;letter-spacing:0.035px;">Core #1 Thermal Throttling</div>
<div class="t" style="right:136.30px;top:210.77px;height:12px;line-height:12px;font-size:7.0px;color:#222;letter-spacing:-0.262px;">No</div>
<div class="t" style="right:85.30px;top:210.77px;height:12px;line-height:12px;font-size:7.0px;color:#222;letter-spacing:-0.262px;">No</div>
<div class="t" style="right:34.30px;top:210.77px;height:12px;line-height:12px;font-size:7.0px;color:#222;letter-spacing:-0.262px;">No</div>
<svg style="left:419.6px;top:222.75px" width="9" height="9" viewBox="0 0 9 9"><circle cx="4.5" cy="4.5" r="3.4" fill="#f6f6f6" stroke="#626262" stroke-width="1.05"/><path d="M3.6 4.4 H5.4" stroke="#a89a9a" stroke-width="0.6"/></svg>
<div class="t" style="left:430.10px;top:221.65px;height:12px;line-height:12px;font-size:7.0px;color:#222;letter-spacing:0.035px;">Core #2 Thermal Throttling</div>
<div class="t" style="right:136.30px;top:221.65px;height:12px;line-height:12px;font-size:7.0px;color:#222;letter-spacing:-0.262px;">No</div>
<div class="t" style="right:85.30px;top:221.65px;height:12px;line-height:12px;font-size:7.0px;color:#222;letter-spacing:-0.262px;">No</div>
<div class="t" style="right:34.30px;top:221.65px;height:12px;line-height:12px;font-size:7.0px;color:#222;letter-spacing:-0.262px;">No</div>
<svg style="left:419.6px;top:233.62px" width="9" height="9" viewBox="0 0 9 9"><circle cx="4.5" cy="4.5" r="3.4" fill="#f6f6f6" stroke="#626262" stroke-width="1.05"/><path d="M3.6 4.4 H5.4" stroke="#a89a9a" stroke-width="0.6"/></svg>
<div class="t" style="left:430.10px;top:232.52px;height:12px;line-height:12px;font-size:7.0px;color:#222;letter-spacing:0.035px;">Core #3 Thermal Throttling</div>
<div class="t" style="right:136.30px;top:232.52px;height:12px;line-height:12px;font-size:7.0px;color:#222;letter-spacing:-0.262px;">No</div>
<div class="t" style="right:85.30px;top:232.52px;height:12px;line-height:12px;font-size:7.0px;color:#222;letter-spacing:-0.262px;">No</div>
<div class="t" style="right:34.30px;top:232.52px;height:12px;line-height:12px;font-size:7.0px;color:#222;letter-spacing:-0.262px;">No</div>
<svg style="left:419.6px;top:244.50px" width="9" height="9" viewBox="0 0 9 9"><circle cx="4.5" cy="4.5" r="3.4" fill="#f6f6f6" stroke="#626262" stroke-width="1.05"/><path d="M3.6 4.4 H5.4" stroke="#a89a9a" stroke-width="0.6"/></svg>
<div class="t" style="left:430.10px;top:243.40px;height:12px;line-height:12px;font-size:7.0px;color:#222;letter-spacing:0.035px;">Core #4 Thermal Throttling</div>
<div class="t" style="right:136.30px;top:243.40px;height:12px;line-height:12px;font-size:7.0px;color:#222;letter-spacing:-0.262px;">No</div>
<div class="t" style="right:85.30px;top:243.40px;height:12px;line-height:12px;font-size:7.0px;color:#222;letter-spacing:-0.262px;">No</div>
<div class="t" style="right:34.30px;top:243.40px;height:12px;line-height:12px;font-size:7.0px;color:#222;letter-spacing:-0.262px;">No</div>
<svg style="left:419.6px;top:255.38px" width="9" height="9" viewBox="0 0 9 9"><circle cx="4.5" cy="4.5" r="3.4" fill="#f6f6f6" stroke="#626262" stroke-width="1.05"/><path d="M3.6 4.4 H5.4" stroke="#a89a9a" stroke-width="0.6"/></svg>
<div class="t" style="left:430.10px;top:254.28px;height:12px;line-height:12px;font-size:7.0px;color:#222;letter-spacing:0.035px;">Core #5 Thermal Throttling</div>
<div class="t" style="right:136.30px;top:254.28px;height:12px;line-height:12px;font-size:7.0px;color:#222;letter-spacing:-0.262px;">No</div>
<div class="t" style="right:85.30px;top:254.28px;height:12px;line-height:12px;font-size:7.0px;color:#222;letter-spacing:-0.262px;">No</div>
<div class="t" style="right:34.30px;top:254.28px;height:12px;line-height:12px;font-size:7.0px;color:#222;letter-spacing:-0.262px;">No</div>
<svg style="left:419.6px;top:266.26px" width="9" height="9" viewBox="0 0 9 9"><circle cx="4.5" cy="4.5" r="3.4" fill="#f6f6f6" stroke="#626262" stroke-width="1.05"/><path d="M3.6 4.4 H5.4" stroke="#a89a9a" stroke-width="0.6"/></svg>
<div class="t" style="left:430.10px;top:265.16px;height:12px;line-height:12px;font-size:7.0px;color:#222;letter-spacing:-0.015px;">Core #0 Critical Temperature</div>
<div class="t" style="right:136.30px;top:265.16px;height:12px;line-height:12px;font-size:7.0px;color:#222;letter-spacing:-0.262px;">No</div>
<div class="t" style="right:85.30px;top:265.16px;height:12px;line-height:12px;font-size:7.0px;color:#222;letter-spacing:-0.262px;">No</div>
<div class="t" style="right:34.30px;top:265.16px;height:12px;line-height:12px;font-size:7.0px;color:#222;letter-spacing:-0.262px;">No</div>
<svg style="left:419.6px;top:277.13px" width="9" height="9" viewBox="0 0 9 9"><circle cx="4.5" cy="4.5" r="3.4" fill="#f6f6f6" stroke="#626262" stroke-width="1.05"/><path d="M3.6 4.4 H5.4" stroke="#a89a9a" stroke-width="0.6"/></svg>
<div class="t" style="left:430.10px;top:276.03px;height:12px;line-height:12px;font-size:7.0px;color:#222;letter-spacing:-0.015px;">Core #1 Critical Temperature</div>
<div class="t" style="right:136.30px;top:276.03px;height:12px;line-height:12px;font-size:7.0px;color:#222;letter-spacing:-0.262px;">No</div>
<div class="t" style="right:85.30px;top:276.03px;height:12px;line-height:12px;font-size:7.0px;color:#222;letter-spacing:-0.262px;">No</div>
<div class="t" style="right:34.30px;top:276.03px;height:12px;line-height:12px;font-size:7.0px;color:#222;letter-spacing:-0.262px;">No</div>
<svg style="left:419.6px;top:288.01px" width="9" height="9" viewBox="0 0 9 9"><circle cx="4.5" cy="4.5" r="3.4" fill="#f6f6f6" stroke="#626262" stroke-width="1.05"/><path d="M3.6 4.4 H5.4" stroke="#a89a9a" stroke-width="0.6"/></svg>
<div class="t" style="left:430.10px;top:286.91px;height:12px;line-height:12px;font-size:7.0px;color:#222;letter-spacing:-0.015px;">Core #2 Critical Temperature</div>
<div class="t" style="right:136.30px;top:286.91px;height:12px;line-height:12px;font-size:7.0px;color:#222;letter-spacing:-0.262px;">No</div>
<div class="t" style="right:85.30px;top:286.91px;height:12px;line-height:12px;font-size:7.0px;color:#222;letter-spacing:-0.262px;">No</div>
<div class="t" style="right:34.30px;top:286.91px;height:12px;line-height:12px;font-size:7.0px;color:#222;letter-spacing:-0.262px;">No</div>
<svg style="left:419.6px;top:298.89px" width="9" height="9" viewBox="0 0 9 9"><circle cx="4.5" cy="4.5" r="3.4" fill="#f6f6f6" stroke="#626262" stroke-width="1.05"/><path d="M3.6 4.4 H5.4" stroke="#a89a9a" stroke-width="0.6"/></svg>
<div class="t" style="left:430.10px;top:297.79px;height:12px;line-height:12px;font-size:7.0px;color:#222;letter-spacing:-0.015px;">Core #3 Critical Temperature</div>
<div class="t" style="right:136.30px;top:297.79px;height:12px;line-height:12px;font-size:7.0px;color:#222;letter-spacing:-0.262px;">No</div>
<div class="t" style="right:85.30px;top:297.79px;height:12px;line-height:12px;font-size:7.0px;color:#222;letter-spacing:-0.262px;">No</div>
<div class="t" style="right:34.30px;top:297.79px;height:12px;line-height:12px;font-size:7.0px;color:#222;letter-spacing:-0.262px;">No</div>
<svg style="left:419.6px;top:309.76px" width="9" height="9" viewBox="0 0 9 9"><circle cx="4.5" cy="4.5" r="3.4" fill="#f6f6f6" stroke="#626262" stroke-width="1.05"/><path d="M3.6 4.4 H5.4" stroke="#a89a9a" stroke-width="0.6"/></svg>
<div class="t" style="left:430.10px;top:308.66px;height:12px;line-height:12px;font-size:7.0px;color:#222;letter-spacing:-0.015px;">Core #4 Critical Temperature</div>
<div class="t" style="right:136.30px;top:308.66px;height:12px;line-height:12px;font-size:7.0px;color:#222;letter-spacing:-0.262px;">No</div>
<div class="t" style="right:85.30px;top:308.66px;height:12px;line-height:12px;font-size:7.0px;color:#222;letter-spacing:-0.262px;">No</div>
<div class="t" style="right:34.30px;top:308.66px;height:12px;line-height:12px;font-size:7.0px;color:#222;letter-spacing:-0.262px;">No</div>
<svg style="left:419.6px;top:320.64px" width="9" height="9" viewBox="0 0 9 9"><circle cx="4.5" cy="4.5" r="3.4" fill="#f6f6f6" stroke="#626262" stroke-width="1.05"/><path d="M3.6 4.4 H5.4" stroke="#a89a9a" stroke-width="0.6"/></svg>
<div class="t" style="left:430.10px;top:319.54px;height:12px;line-height:12px;font-size:7.0px;color:#222;letter-spacing:-0.015px;">Core #5 Critical Temperature</div>
<div class="t" style="right:136.30px;top:319.54px;height:12px;line-height:12px;font-size:7.0px;color:#222;letter-spacing:-0.262px;">No</div>
<div class="t" style="right:85.30px;top:319.54px;height:12px;line-height:12px;font-size:7.0px;color:#222;letter-spacing:-0.262px;">No</div>
<div class="t" style="right:34.30px;top:319.54px;height:12px;line-height:12px;font-size:7.0px;color:#222;letter-spacing:-0.262px;">No</div>
<svg style="left:419.6px;top:331.52px" width="9" height="9" viewBox="0 0 9 9"><circle cx="4.5" cy="4.5" r="3.4" fill="#f6f6f6" stroke="#626262" stroke-width="1.05"/><path d="M3.6 4.4 H5.4" stroke="#a89a9a" stroke-width="0.6"/></svg>
<div class="t" style="left:430.10px;top:330.42px;height:12px;line-height:12px;font-size:7.0px;color:#222;letter-spacing:-0.062px;">Core #0 Power Limit Exceeded</div>
<div class="t" style="right:136.30px;top:330.42px;height:12px;line-height:12px;font-size:7.0px;color:#222;letter-spacing:-0.262px;">No</div>
<div class="t" style="right:85.30px;top:330.42px;height:12px;line-height:12px;font-size:7.0px;color:#222;letter-spacing:-0.262px;">No</div>
<div class="t" style="right:34.30px;top:330.42px;height:12px;line-height:12px;font-size:7.0px;color:#222;letter-spacing:-0.429px;">Yes</div>
<svg style="left:419.6px;top:342.39px" width="9" height="9" viewBox="0 0 9 9"><circle cx="4.5" cy="4.5" r="3.4" fill="#f6f6f6" stroke="#626262" stroke-width="1.05"/><path d="M3.6 4.4 H5.4" stroke="#a89a9a" stroke-width="0.6"/></svg>
<div class="t" style="left:430.10px;top:341.29px;height:12px;line-height:12px;font-size:7.0px;color:#222;letter-spacing:-0.062px;">Core #1 Power Limit Exceeded</div>
<div class="t" style="right:136.30px;top:341.29px;height:12px;line-height:12px;font-size:7.0px;color:#222;letter-spacing:-0.262px;">No</div>
<div class="t" style="right:85.30px;top:341.29px;height:12px;line-height:12px;font-size:7.0px;color:#222;letter-spacing:-0.262px;">No</div>
<div class="t" style="right:34.30px;top:341.29px;height:12px;line-height:12px;font-size:7.0px;color:#222;letter-spacing:-0.429px;">Yes</div>
<svg style="left:419.6px;top:353.27px" width="9" height="9" viewBox="0 0 9 9"><circle cx="4.5" cy="4.5" r="3.4" fill="#f6f6f6" stroke="#626262" stroke-width="1.05"/><path d="M3.6 4.4 H5.4" stroke="#a89a9a" stroke-width="0.6"/></svg>
<div class="t" style="left:430.10px;top:352.17px;height:12px;line-height:12px;font-size:7.0px;color:#222;letter-spacing:-0.062px;">Core #2 Power Limit Exceeded</div>
<div class="t" style="right:136.30px;top:352.17px;height:12px;line-height:12px;font-size:7.0px;color:#222;letter-spacing:-0.262px;">No</div>
<div class="t" style="right:85.30px;top:352.17px;height:12px;line-height:12px;font-size:7.0px;color:#222;letter-spacing:-0.262px;">No</div>
<div class="t" style="right:34.30px;top:352.17px;height:12px;line-height:12px;font-size:7.0px;color:#222;letter-spacing:-0.429px;">Yes</div>
<svg style="left:419.6px;top:364.15px" width="9" height="9" viewBox="0 0 9 9"><circle cx="4.5" cy="4.5" r="3.4" fill="#f6f6f6" stroke="#626262" stroke-width="1.05"/><path d="M3.6 4.4 H5.4" stroke="#a89a9a" stroke-width="0.6"/></svg>
<div class="t" style="left:430.10px;top:363.05px;height:12px;line-height:12px;font-size:7.0px;color:#222;letter-spacing:-0.062px;">Core #3 Power Limit Exceeded</div>
<div class="t" style="right:136.30px;top:363.05px;height:12px;line-height:12px;font-size:7.0px;color:#222;letter-spacing:-0.262px;">No</div>
<div class="t" style="right:85.30px;top:363.05px;height:12px;line-height:12px;font-size:7.0px;color:#222;letter-spacing:-0.262px;">No</div>
<div class="t" style="right:34.30px;top:363.05px;height:12px;line-height:12px;font-size:7.0px;color:#222;letter-spacing:-0.429px;">Yes</div>
<svg style="left:419.6px;top:375.03px" width="9" height="9" viewBox="0 0 9 9"><circle cx="4.5" cy="4.5" r="3.4" fill="#f6f6f6" stroke="#626262" stroke-width="1.05"/><path d="M3.6 4.4 H5.4" stroke="#a89a9a" stroke-width="0.6"/></svg>
<div class="t" style="left:430.10px;top:373.93px;height:12px;line-height:12px;font-size:7.0px;color:#222;letter-spacing:-0.062px;">Core #4 Power Limit Exceeded</div>
<div class="t" style="right:136.30px;top:373.93px;height:12px;line-height:12px;font-size:7.0px;color:#222;letter-spacing:-0.262px;">No</div>
<div class="t" style="right:85.30px;top:373.93px;height:12px;line-height:12px;font-size:7.0px;color:#222;letter-spacing:-0.262px;">No</div>
<div class="t" style="right:34.30px;top:373.93px;height:12px;line-height:12px;font-size:7.0px;color:#222;letter-spacing:-0.429px;">Yes</div>
<svg style="left:419.6px;top:385.90px" width="9" height="9" viewBox="0 0 9 9"><circle cx="4.5" cy="4.5" r="3.4" fill="#f6f6f6" stroke="#626262" stroke-width="1.05"/><path d="M3.6 4.4 H5.4" stroke="#a89a9a" stroke-width="0.6"/></svg>
<div class="t" style="left:430.10px;top:384.80px;height:12px;line-height:12px;font-size:7.0px;color:#222;letter-spacing:-0.062px;">Core #5 Power Limit Exceeded</div>
<div class="t" style="right:136.30px;top:384.80px;height:12px;line-height:12px;font-size:7.0px;color:#222;letter-spacing:-0.262px;">No</div>
<div class="t" style="right:85.30px;top:384.80px;height:12px;line-height:12px;font-size:7.0px;color:#222;letter-spacing:-0.262px;">No</div>
<div class="t" style="right:34.30px;top:384.80px;height:12px;line-height:12px;font-size:7.0px;color:#222;letter-spacing:-0.429px;">Yes</div>
<svg style="left:419.6px;top:396.78px" width="9" height="9" viewBox="0 0 9 9"><circle cx="4.5" cy="4.5" r="3.4" fill="#f6f6f6" stroke="#626262" stroke-width="1.05"/><path d="M3.6 4.4 H5.4" stroke="#a89a9a" stroke-width="0.6"/></svg>
<div class="t" style="left:430.10px;top:395.68px;height:12px;line-height:12px;font-size:7.0px;color:#222;letter-spacing:-0.042px;">Package/Ring Thermal Throttling</div>
<div class="t" style="right:136.30px;top:395.68px;height:12px;line-height:12px;font-size:7.0px;color:#222;letter-spacing:-0.262px;">No</div>
<div class="t" style="right:85.30px;top:395.68px;height:12px;line-height:12px;font-size:7.0px;color:#222;letter-spacing:-0.262px;">No</div>
<div class="t" style="right:34.30px;top:395.68px;height:12px;line-height:12px;font-size:7.0px;color:#222;letter-spacing:-0.262px;">No</div>
<svg style="left:419.6px;top:407.66px" width="9" height="9" viewBox="0 0 9 9"><circle cx="4.5" cy="4.5" r="3.4" fill="#f6f6f6" stroke="#626262" stroke-width="1.05"/><path d="M3.6 4.4 H5.4" stroke="#a89a9a" stroke-width="0.6"/></svg>
<div class="t" style="left:430.10px;top:406.56px;height:12px;line-height:12px;font-size:7.0px;color:#222;letter-spacing:-0.080px;">Package/Ring Critical Temperature</div>
<div class="t" style="right:136.30px;top:406.56px;height:12px;line-height:12px;font-size:7.0px;color:#222;letter-spacing:-0.262px;">No</div>
<div class="t" style="right:85.30px;top:406.56px;height:12px;line-height:12px;font-size:7.0px;color:#222;letter-spacing:-0.262px;">No</div>
<div class="t" style="right:34.30px;top:406.56px;height:12px;line-height:12px;font-size:7.0px;color:#222;letter-spacing:-0.262px;">No</div>
<svg style="left:420.7px;top:428.71px" width="7" height="10" viewBox="0 0 7 10"><g stroke="#6a6a6a" stroke-width="0.7"><path d="M0 1.6 H7 M0 3.3 H7 M0 5 H7 M0 6.7 H7 M0 8.4 H7"/></g><rect x="1.1" y="0.5" width="4.8" height="9" rx="0.5" fill="#2e2e2e"/><rect x="1.8" y="1.2" width="3.4" height="7.6" fill="#454545"/></svg>
<div class="t" style="left:430.80px;top:428.01px;height:12px;line-height:12px;font-size:7.0px;color:#222;letter-spacing:0.049px;font-style:italic;">CPU [#0]: Intel Core i5-8400: Enh...</div>
<svg style="left:421.2px;top:439.49px" width="5.4" height="10.4" viewBox="0 0 5.4 10.4"><rect x="1.2" y="0.5" width="3.0" height="9.4" rx="1.5" fill="#eaf1fa" stroke="#7aa2d6" stroke-width="0.9"/><rect x="1.95" y="3.8" width="1.5" height="5.2" rx="0.6" fill="#f25a06"/></svg>
<div class="t" style="left:430.10px;top:439.19px;height:12px;line-height:12px;font-size:7.0px;color:#222;letter-spacing:-0.352px;">CPU Package</div>
<div class="t" style="right:136.30px;top:439.19px;height:12px;line-height:12px;font-size:7.0px;color:#222;letter-spacing:-0.070px;">38 °C</div>
<div class="t" style="right:85.30px;top:439.19px;height:12px;line-height:12px;font-size:7.0px;color:#222;letter-spacing:-0.070px;">36 °C</div>
<div class="t" style="right:34.30px;top:439.19px;height:12px;line-height:12px;font-size:7.0px;color:#222;letter-spacing:-0.070px;">60 °C</div>
<svg style="left:421.2px;top:450.36px" width="5.4" height="10.4" viewBox="0 0 5.4 10.4"><rect x="1.2" y="0.5" width="3.0" height="9.4" rx="1.5" fill="#eaf1fa" stroke="#7aa2d6" stroke-width="0.9"/><rect x="1.95" y="3.8" width="1.5" height="5.2" rx="0.6" fill="#f25a06"/></svg>
<div class="t" style="left:430.10px;top:450.06px;height:12px;line-height:12px;font-size:7.0px;color:#222;letter-spacing:-0.251px;">CPU IA Cores</div>
<div class="t" style="right:136.30px;top:450.06px;height:12px;line-height:12px;font-size:7.0px;color:#222;letter-spacing:-0.070px;">38 °C</div>
<div class="t" style="right:85.30px;top:450.06px;height:12px;line-height:12px;font-size:7.0px;color:#222;letter-spacing:-0.070px;">36 °C</div>
<div class="t" style="right:34.30px;top:450.06px;height:12px;line-height:12px;font-size:7.0px;color:#222;letter-spacing:-0.070px;">60 °C</div>
<svg style="left:421.2px;top:461.24px" width="5.4" height="10.4" viewBox="0 0 5.4 10.4"><rect x="1.2" y="0.5" width="3.0" height="9.4" rx="1.5" fill="#eaf1fa" stroke="#7aa2d6" stroke-width="0.9"/><rect x="1.95" y="3.8" width="1.5" height="5.2" rx="0.6" fill="#f25a06"/></svg>
<div class="t" style="left:430.10px;top:460.94px;height:12px;line-height:12px;font-size:7.0px;color:#222;letter-spacing:-0.210px;">CPU GT Cores (Graphics)</div>
<div class="t" style="right:136.30px;top:460.94px;height:12px;line-height:12px;font-size:7.0px;color:#222;letter-spacing:-0.070px;">35 °C</div>
<div class="t" style="right:85.30px;top:460.94px;height:12px;line-height:12px;font-size:7.0px;color:#222;letter-spacing:-0.070px;">34 °C</div>
<div class="t" style="right:34.30px;top:460.94px;height:12px;line-height:12px;font-size:7.0px;color:#222;letter-spacing:-0.070px;">47 °C</div>
<svg style="left:420.9px;top:472.12px" width="6.4" height="10.4" viewBox="0 0 7 11"><path d="M2.6 0.5 H5.6 L4.2 4 H6 L1.8 10.4 L3 6 H1 Z" fill="#fde24a" stroke="#e8742a" stroke-width="0.75" stroke-linejoin="round"/></svg>
<div class="t" style="left:430.10px;top:471.82px;height:12px;line-height:12px;font-size:7.0px;color:#222;letter-spacing:-0.266px;">CPU Package Power</div>
<div class="t" style="right:136.30px;top:471.82px;height:12px;line-height:12px;font-size:7.0px;color:#222;letter-spacing:-0.050px;">16.490 W</div>
<div class="t" style="right:85.30px;top:471.82px;height:12px;line-height:12px;font-size:7.0px;color:#222;letter-spacing:-0.050px;">13.121 W</div>
<div class="t" style="right:34.30px;top:471.82px;height:12px;line-height:12px;font-size:7.0px;color:#222;letter-spacing:-0.050px;">73.863 W</div>
<svg style="left:420.9px;top:483.00px" width="6.4" height="10.4" viewBox="0 0 7 11"><path d="M2.6 0.5 H5.6 L4.2 4 H6 L1.8 10.4 L3 6 H1 Z" fill="#fde24a" stroke="#e8742a" stroke-width="0.75" stroke-linejoin="round"/></svg>
<div class="t" style="left:430.10px;top:482.70px;height:12px;line-height:12px;font-size:7.0px;color:#222;letter-spacing:-0.121px;">IA Cores Power</div>
<div class="t" style="right:136.30px;top:482.70px;height:12px;line-height:12px;font-size:7.0px;color:#222;letter-spacing:-0.044px;">5.378 W</div>
<div class="t" style="right:85.30px;top:482.70px;height:12px;line-height:12px;font-size:7.0px;color:#222;letter-spacing:-0.044px;">2.025 W</div>
<div class="t" style="right:34.30px;top:482.70px;height:12px;line-height:12px;font-size:7.0px;color:#222;letter-spacing:-0.050px;">62.775 W</div>
<svg style="left:420.7px;top:504.85px" width="7" height="10" viewBox="0 0 7 10"><g stroke="#6a6a6a" stroke-width="0.7"><path d="M0 1.6 H7 M0 3.3 H7 M0 5 H7 M0 6.7 H7 M0 8.4 H7"/></g><rect x="1.1" y="0.5" width="4.8" height="9" rx="0.5" fill="#2e2e2e"/><rect x="1.8" y="1.2" width="3.4" height="7.6" fill="#454545"/></svg>
<div class="t" style="left:430.80px;top:504.15px;height:12px;line-height:12px;font-size:7.0px;color:#222;letter-spacing:0.030px;font-style:italic;">CPU [#0]: Intel Core i5-8400: C-S...</div>
<svg style="left:419.6px;top:516.43px" width="9" height="9" viewBox="0 0 9 9"><circle cx="4.5" cy="4.5" r="3.4" fill="#f6f6f6" stroke="#626262" stroke-width="1.05"/><path d="M3.6 4.4 H5.4" stroke="#a89a9a" stroke-width="0.6"/></svg>
<div class="t" style="left:430.10px;top:515.33px;height:12px;line-height:12px;font-size:7.0px;color:#222;letter-spacing:-0.081px;">Core #0 Thread 0 C0 Residency</div>
<div class="t" style="right:136.30px;top:515.33px;height:12px;line-height:12px;font-size:7.0px;color:#222;letter-spacing:0.157px;">7.0 %</div>
<div class="t" style="right:85.30px;top:515.33px;height:12px;line-height:12px;font-size:7.0px;color:#222;letter-spacing:0.157px;">1.2 %</div>
<div class="t" style="right:34.30px;top:515.33px;height:12px;line-height:12px;font-size:7.0px;color:#222;letter-spacing:0.085px;">100.0 %</div>
<svg style="left:419.6px;top:527.30px" width="9" height="9" viewBox="0 0 9 9"><circle cx="4.5" cy="4.5" r="3.4" fill="#f6f6f6" stroke="#626262" stroke-width="1.05"/><path d="M3.6 4.4 H5.4" stroke="#a89a9a" stroke-width="0.6"/></svg>
<div class="t" style="left:430.10px;top:526.20px;height:12px;line-height:12px;font-size:7.0px;color:#222;letter-spacing:-0.081px;">Core #1 Thread 0 C0 Residency</div>
<div class="t" style="right:136.30px;top:526.20px;height:12px;line-height:12px;font-size:7.0px;color:#222;letter-spacing:0.157px;">9.1 %</div>
<div class="t" style="right:85.30px;top:526.20px;height:12px;line-height:12px;font-size:7.0px;color:#222;letter-spacing:0.157px;">1.5 %</div>
<div class="t" style="right:34.30px;top:526.20px;height:12px;line-height:12px;font-size:7.0px;color:#222;letter-spacing:0.085px;">100.0 %</div>
<svg style="left:419.6px;top:538.18px" width="9" height="9" viewBox="0 0 9 9"><circle cx="4.5" cy="4.5" r="3.4" fill="#f6f6f6" stroke="#626262" stroke-width="1.05"/><path d="M3.6 4.4 H5.4" stroke="#a89a9a" stroke-width="0.6"/></svg>
<div class="t" style="left:430.10px;top:537.08px;height:12px;line-height:12px;font-size:7.0px;color:#222;letter-spacing:-0.081px;">Core #2 Thread 0 C0 Residency</div>
<div class="t" style="right:136.30px;top:537.08px;height:12px;line-height:12px;font-size:7.0px;color:#222;letter-spacing:0.157px;">6.4 %</div>
<div class="t" style="right:85.30px;top:537.08px;height:12px;line-height:12px;font-size:7.0px;color:#222;letter-spacing:0.157px;">0.9 %</div>
<div class="t" style="right:34.30px;top:537.08px;height:12px;line-height:12px;font-size:7.0px;color:#222;letter-spacing:0.085px;">100.0 %</div>
<svg style="left:419.6px;top:549.06px" width="9" height="9" viewBox="0 0 9 9"><circle cx="4.5" cy="4.5" r="3.4" fill="#f6f6f6" stroke="#626262" stroke-width="1.05"/><path d="M3.6 4.4 H5.4" stroke="#a89a9a" stroke-width="0.6"/></svg>
<div class="t" style="left:430.10px;top:547.96px;height:12px;line-height:12px;font-size:7.0px;color:#222;letter-spacing:-0.081px;">Core #3 Thread 0 C0 Residency</div>
<div class="t" style="right:136.30px;top:547.96px;height:12px;line-height:12px;font-size:7.0px;color:#222;letter-spacing:0.157px;">5.3 %</div>
<div class="t" style="right:85.30px;top:547.96px;height:12px;line-height:12px;font-size:7.0px;color:#222;letter-spacing:0.157px;">1.0 %</div>
<div class="t" style="right:34.30px;top:547.96px;height:12px;line-height:12px;font-size:7.0px;color:#222;letter-spacing:0.085px;">100.0 %</div>
<svg style="left:419.6px;top:559.93px" width="9" height="9" viewBox="0 0 9 9"><circle cx="4.5" cy="4.5" r="3.4" fill="#f6f6f6" stroke="#626262" stroke-width="1.05"/><path d="M3.6 4.4 H5.4" stroke="#a89a9a" stroke-width="0.6"/></svg>
<div class="t" style="left:430.10px;top:558.83px;height:12px;line-height:12px;font-size:7.0px;color:#222;letter-spacing:-0.081px;">Core #4 Thread 0 C0 Residency</div>
<div class="t" style="right:136.30px;top:558.83px;height:12px;line-height:12px;font-size:7.0px;color:#222;letter-spacing:0.157px;">3.9 %</div>
<div class="t" style="right:85.30px;top:558.83px;height:12px;line-height:12px;font-size:7.0px;color:#222;letter-spacing:0.157px;">0.3 %</div>
<div class="t" style="right:34.30px;top:558.83px;height:12px;line-height:12px;font-size:7.0px;color:#222;letter-spacing:0.085px;">100.0 %</div>
<svg style="left:419.6px;top:570.81px" width="9" height="9" viewBox="0 0 9 9"><circle cx="4.5" cy="4.5" r="3.4" fill="#f6f6f6" stroke="#626262" stroke-width="1.05"/><path d="M3.6 4.4 H5.4" stroke="#a89a9a" stroke-width="0.6"/></svg>
<div class="t" style="left:430.10px;top:569.71px;height:12px;line-height:12px;font-size:7.0px;color:#222;letter-spacing:-0.081px;">Core #5 Thread 0 C0 Residency</div>
<div class="t" style="right:136.30px;top:569.71px;height:12px;line-height:12px;font-size:7.0px;color:#222;letter-spacing:0.115px;">11.5 %</div>
<div class="t" style="right:85.30px;top:569.71px;height:12px;line-height:12px;font-size:7.0px;color:#222;letter-spacing:0.157px;">0.9 %</div>
<div class="t" style="right:34.30px;top:569.71px;height:12px;line-height:12px;font-size:7.0px;color:#222;letter-spacing:0.085px;">100.0 %</div>
<svg style="left:419.6px;top:581.69px" width="9" height="9" viewBox="0 0 9 9"><circle cx="4.5" cy="4.5" r="3.4" fill="#f6f6f6" stroke="#626262" stroke-width="1.05"/><path d="M3.6 4.4 H5.4" stroke="#a89a9a" stroke-width="0.6"/></svg>
<div class="t" style="left:430.10px;top:580.59px;height:12px;line-height:12px;font-size:7.0px;color:#222;letter-spacing:-0.108px;">Core #0 C3 Residency</div>
<div class="t" style="right:136.30px;top:580.59px;height:12px;line-height:12px;font-size:7.0px;color:#222;letter-spacing:0.157px;">4.6 %</div>
<div class="t" style="right:85.30px;top:580.59px;height:12px;line-height:12px;font-size:7.0px;color:#222;letter-spacing:0.157px;">0.0 %</div>
<div class="t" style="right:34.30px;top:580.59px;height:12px;line-height:12px;font-size:7.0px;color:#222;letter-spacing:0.115px;">15.5 %</div>
<svg style="left:419.6px;top:592.57px" width="9" height="9" viewBox="0 0 9 9"><circle cx="4.5" cy="4.5" r="3.4" fill="#f6f6f6" stroke="#626262" stroke-width="1.05"/><path d="M3.6 4.4 H5.4" stroke="#a89a9a" stroke-width="0.6"/></svg>
<div class="t" style="left:430.10px;top:591.47px;height:12px;line-height:12px;font-size:7.0px;color:#222;letter-spacing:-0.108px;">Core #1 C3 Residency</div>
<div class="t" style="right:136.30px;top:591.47px;height:12px;line-height:12px;font-size:7.0px;color:#222;letter-spacing:0.157px;">2.3 %</div>
<div class="t" style="right:85.30px;top:591.47px;height:12px;line-height:12px;font-size:7.0px;color:#222;letter-spacing:0.157px;">0.0 %</div>
<div class="t" style="right:34.30px;top:591.47px;height:12px;line-height:12px;font-size:7.0px;color:#222;letter-spacing:0.157px;">8.1 %</div>
<svg style="left:419.6px;top:603.44px" width="9" height="9" viewBox="0 0 9 9"><circle cx="4.5" cy="4.5" r="3.4" fill="#f6f6f6" stroke="#626262" stroke-width="1.05"/><path d="M3.6 4.4 H5.4" stroke="#a89a9a" stroke-width="0.6"/></svg>
<div class="t" style="left:430.10px;top:602.34px;height:12px;line-height:12px;font-size:7.0px;color:#222;letter-spacing:-0.108px;">Core #2 C3 Residency</div>
<div class="t" style="right:136.30px;top:602.34px;height:12px;line-height:12px;font-size:7.0px;color:#222;letter-spacing:0.157px;">0.7 %</div>
<div class="t" style="right:85.30px;top:602.34px;height:12px;line-height:12px;font-size:7.0px;color:#222;letter-spacing:0.157px;">0.0 %</div>
<div class="t" style="right:34.30px;top:602.34px;height:12px;line-height:12px;font-size:7.0px;color:#222;letter-spacing:0.157px;">9.9 %</div>
<div style="left:415.40px;top:613.38px;width:292.00px;height:5.32px;overflow:hidden;">
<svg style="left:4.90px;top:0.94px" width="9" height="9" viewBox="0 0 9 9"><circle cx="4.5" cy="4.5" r="3.4" fill="#f6f6f6" stroke="#626262" stroke-width="1.05"/><path d="M3.6 4.4 H5.4" stroke="#a89a9a" stroke-width="0.6"/></svg>
<div class="t" style="left:15.00px;top:-0.06px;height:12px;line-height:12px;font-size:7px;color:#222;">Core #3 C3 Residency</div>
<div class="t" style="right:115.70px;top:-0.06px;height:12px;line-height:12px;font-size:7px;color:#222;">5.7 %</div>
<div class="t" style="right:64.70px;top:-0.06px;height:12px;line-height:12px;font-size:7px;color:#222;">0.0 %</div>
<div class="t" style="right:13.70px;top:-0.06px;height:12px;line-height:12px;font-size:7px;color:#222;">9.8 %</div>
</div>
<div style="left:707.40px;top:20.50px;width:12.00px;height:598.20px;background:#f0f0f0;"></div>
<div style="left:708.30px;top:140.00px;width:9.40px;height:135.00px;background:#cdcdcd;"></div>
<svg style="left:709.8px;top:24.4px" width="6" height="5" viewBox="0 0 6 5"><path d="M0.8 4 L3 1.4 L5.2 4" stroke="#505050" stroke-width="1" fill="none"/></svg>
<svg style="left:709.8px;top:611.4px" width="6" height="5" viewBox="0 0 6 5"><path d="M0.8 1 L3 3.6 L5.2 1" stroke="#505050" stroke-width="1" fill="none"/></svg>
<div style="left:415.40px;top:618.70px;width:304.00px;height:10.60px;background:#f0f0f0;"></div>
<div style="left:428.00px;top:620.60px;width:235.00px;height:7.00px;background:#cdcdcd;"></div>
<svg style="left:419.6px;top:621px" width="5" height="6" viewBox="0 0 5 6"><path d="M4 0.8 L1.4 3 L4 5.2" stroke="#505050" stroke-width="1" fill="none"/></svg>
<svg style="left:700.4px;top:621px" width="5" height="6" viewBox="0 0 5 6"><path d="M1 0.8 L3.6 3 L1 5.2" stroke="#505050" stroke-width="1" fill="none"/></svg>
<div style="left:415.40px;top:629.30px;width:304.00px;height:36.00px;background:#f0f0f0;border-top:1px solid #fdfdfd;"></div>
<div style="left:415.40px;top:630.60px;width:304.00px;height:0.90px;background:#dadada;"></div>
<div style="left:416.60px;top:635.60px;width:25.90px;height:22.00px;background:#e3e3e3;border:0.8px solid #bcbcbc;"></div>
<div style="left:444.00px;top:635.60px;width:26.90px;height:22.00px;background:#d2d2d2;border:0.8px solid #c8c8c8;"></div>
<div style="left:527.60px;top:635.60px;width:26.40px;height:22.00px;background:#e3e3e3;border:0.8px solid #bcbcbc;"></div>
<div style="left:598.30px;top:635.60px;width:26.40px;height:22.00px;background:#e3e3e3;border:0.8px solid #bcbcbc;"></div>
<div style="left:627.30px;top:635.60px;width:26.40px;height:22.00px;background:#e3e3e3;border:0.8px solid #bcbcbc;"></div>
<div style="left:656.40px;top:635.60px;width:26.30px;height:22.00px;background:#e3e3e3;border:0.8px solid #bcbcbc;"></div>
<div style="left:686.20px;top:635.60px;width:26.40px;height:22.00px;background:#e3e3e3;border:0.8px solid #bcbcbc;"></div>
<svg style="left:419.5px;top:643.4px" width="20" height="8.2" viewBox="0 0 22 9"><path d="M0.2 4.5 L5 0 V2.5 H9.6 V6.5 H5 V9 Z" fill="#2a8ae4"/><path d="M21.8 4.5 L17 0 V2.5 H12.4 V6.5 H17 V9 Z" fill="#2a8ae4"/></svg>
<svg style="left:448.2px;top:643.4px" width="18.4" height="8.2" viewBox="0 0 20 9"><path d="M9.6 4.5 L5.2 0.4 V2.8 H0.8 V6.2 H5.2 V8.6 Z" fill="#8cbcea"/><path d="M10.4 4.5 L14.8 0.4 V2.8 H19.2 V6.2 H14.8 V8.6 Z" fill="#8cbcea"/></svg>
<svg style="left:530.6px;top:637.2px" width="21" height="19" viewBox="0 0 21 19"><defs><linearGradient id="mon" x1="0" y1="0" x2="1" y2="1"><stop offset="0" stop-color="#6cbcf4"/><stop offset="0.5" stop-color="#2a88e0"/><stop offset="1" stop-color="#0f58b4"/></linearGradient></defs><path d="M9.6 5.4 H15.6 V10" stroke="#7a7a7a" stroke-width="0.7" fill="none"/><g transform="rotate(11 5.4 4.4)"><rect x="0.8" y="0.9" width="9.4" height="6.6" rx="0.5" fill="url(#mon)" stroke="#1a3a66" stroke-width="0.7"/><rect x="3.6" y="7.7" width="3.8" height="1" fill="#23272e"/><rect x="2.4" y="8.6" width="6.2" height="0.9" fill="#23272e"/></g><g transform="rotate(11 14.6 12.6)"><rect x="9.8" y="8.8" width="9.8" height="6.8" rx="0.5" fill="url(#mon)" stroke="#1a3a66" stroke-width="0.7"/><rect x="12.8" y="15.8" width="3.8" height="1" fill="#23272e"/><rect x="11.6" y="16.7" width="6.2" height="0.9" fill="#23272e"/></g></svg>
<div class="t" style="left:570.20px;top:640.20px;height:12px;line-height:12px;font-size:7.0px;color:#222;letter-spacing:0.081px;">0:33:32</div>
<svg style="left:600.9px;top:636.0px" width="21.4" height="21.4" viewBox="0 0 20 20"><circle cx="10" cy="10" r="9.1" fill="#fdfdfd" stroke="#2e2e2e" stroke-width="1.2"/><g stroke="#333" stroke-width="0.8"><path d="M10 2 V4 M10 16 V18 M2 10 H4 M16 10 H18 M4.4 4.4 L5.6 5.6 M15.6 4.4 L14.4 5.6 M4.4 15.6 L5.6 14.4 M15.6 15.6 L14.4 14.4"/></g><path d="M10 3.4 V10.4 H14.6" stroke="#111" stroke-width="1.5" fill="none"/></svg>
<svg style="left:631.6px;top:637.2px" width="19" height="19" viewBox="0 0 19 19"><path d="M2.4 1 H11.6 L15 4.2 V17.4 H2.4 Z" fill="#f6f6f6" stroke="#b8b8b8" stroke-width="0.6"/><path d="M11.6 1 V4.2 H15" fill="#e4e4e4" stroke="#b8b8b8" stroke-width="0.5"/><path d="M4.6 3.4 V15.4 M7 3.4 V15.4 M9.4 3.4 V15.4 M11.8 5.4 V15.4" stroke="#dcdcdc" stroke-width="1"/><path d="M14.6 10.8 V18.2 M10.9 14.5 H18.3" stroke="#8ccb4e" stroke-width="3" stroke-linecap="round"/></svg>
<svg style="left:659.1px;top:636.3px" width="21" height="21" viewBox="0 0 20 20"><defs><linearGradient id="gg" x1="0" y1="0" x2="1" y2="1"><stop offset="0" stop-color="#f2f2f2"/><stop offset="0.5" stop-color="#c4c4c4"/><stop offset="1" stop-color="#8e8e8e"/></linearGradient></defs><path d="M19.46 8.35 L19.46 11.65 L17.00 11.68 L16.14 13.76 L17.85 15.52 L15.52 17.85 L13.76 16.14 L11.68 17.00 L11.65 19.46 L8.35 19.46 L8.32 17.00 L6.24 16.14 L4.48 17.85 L2.15 15.52 L3.86 13.76 L3.00 11.68 L0.54 11.65 L0.54 8.35 L3.00 8.32 L3.86 6.24 L2.15 4.48 L4.48 2.15 L6.24 3.86 L8.32 3.00 L8.35 0.54 L11.65 0.54 L11.68 3.00 L13.76 3.86 L15.52 2.15 L17.85 4.48 L16.14 6.24 L17.00 8.32 Z" fill="url(#gg)" stroke="#a0a0a0" stroke-width="0.5" stroke-linejoin="round"/><circle cx="10" cy="10" r="4.6" fill="#8c8c8c"/><circle cx="10.3" cy="10.4" r="3.7" fill="#e0e0e0"/></svg>
<svg style="left:691.9px;top:639.2px" width="16" height="16" viewBox="0 0 16 16"><defs><linearGradient id="xg" x1="0" y1="0" x2="0" y2="1"><stop offset="0" stop-color="#3f9fe8"/><stop offset="0.5" stop-color="#4aaaf0"/><stop offset="1" stop-color="#1c78c4"/></linearGradient></defs><path d="M2.2 2 L13.8 14 M13.8 2 L2.2 14" stroke="url(#xg)" stroke-width="4.7"/></svg>
</div>
<div class="ct" style="left:0;top:0;width:728px;height:667px;">
<div style="left:202.30px;top:383.60px;width:212.10px;height:263.80px;background:#f0f0f0;border-right:1.1px solid #1c3a5e;border-top:0.8px solid #66727f;box-shadow:0 0 6px rgba(0,0,0,0.24);clip-path:inset(-14px 0 -14px -14px);"></div>
<div style="left:202.30px;top:384.40px;width:211.00px;height:28.30px;background:#fff;"></div>
<svg style="left:204.5px;top:386.7px" width="9.8" height="9.8" viewBox="0 0 9.8 9.8"><defs><linearGradient id="cto" x1="0" y1="0" x2="0" y2="1"><stop offset="0" stop-color="#e8741c"/><stop offset="1" stop-color="#fbe6d4"/></linearGradient><linearGradient id="ctb" x1="0" y1="0" x2="0" y2="1"><stop offset="0" stop-color="#2a62b8"/><stop offset="1" stop-color="#dfe8f6"/></linearGradient></defs><rect x="0.4" y="0.4" width="9" height="9" rx="1.8" fill="#d8dcd8" stroke="#7c847c" stroke-width="0.7"/><rect x="1.3" y="1.3" width="3.2" height="7.2" fill="url(#cto)"/><rect x="5.6" y="1.3" width="2.9" height="7.2" fill="url(#ctb)"/><rect x="4.3" y="1.3" width="1.4" height="7.2" fill="#f4f4f4"/><path d="M3.6 8.2 L5.9 1.6" stroke="#c01818" stroke-width="1.1"/></svg>
<div class="t" style="left:217.40px;top:386.10px;height:12px;line-height:12px;font-size:8.0px;color:#111;letter-spacing:-0.079px;">Core Temp 1.12.1</div>
<svg style="left:334px;top:386px" width="72" height="12" viewBox="0 0 72 12"><g fill="none"><path d="M3.6 5.9 H9.2" stroke="#222" stroke-width="0.8"/><rect x="32.4" y="3.4" width="5" height="5" stroke="#cfcfcf" stroke-width="0.7"/><path d="M61.6 2.8 L67.6 8.8 M67.6 2.8 L61.6 8.8" stroke="#222" stroke-width="0.8"/></g></svg>
<div class="t" style="left:207.20px;top:400.80px;height:12px;line-height:12px;font-size:7.7px;color:#222;"><span class="c">檔案</span>(F)</div>
<div class="t" style="left:240.30px;top:400.80px;height:12px;line-height:12px;font-size:7.7px;color:#222;"><span class="c">選項</span>(O)</div>
<div class="t" style="left:275.80px;top:400.80px;height:12px;line-height:12px;font-size:7.7px;color:#222;"><span class="c">工具</span>(T)</div>
<div class="t" style="left:310.20px;top:400.80px;height:12px;line-height:12px;font-size:7.7px;color:#222;"><span class="c">說明</span>(H)</div>
<div class="t" style="left:204.50px;top:417.60px;height:12px;line-height:12px;font-size:7.0px;color:#111;"><span class="c">選擇</span> CPU:</div>
<div style="left:250.00px;top:417.70px;width:65.20px;height:12.70px;background:#cfcfcf;border:0.7px solid #bdbdbd;"></div>
<div class="t" style="left:252.40px;top:417.80px;height:12px;line-height:12px;font-size:7.0px;color:#8a8a8a;"><span class="c">處理器</span> #0</div>
<svg style="left:306.4px;top:421.6px" width="7" height="5" viewBox="0 0 7 5"><path d="M0.8 0.8 L3.5 3.6 L6.2 0.8" stroke="#a2a2a2" stroke-width="0.8" fill="none"/></svg>
<div style="left:317.00px;top:417.70px;width:12.70px;height:12.50px;background:#fafafa;border-top:0.8px solid #b8b8b8;border-left:0.8px solid #b8b8b8;border-right:0.9px solid #fff;border-bottom:0.9px solid #fff;"></div>
<div class="t" style="left:317.00px;top:418.00px;height:12px;line-height:12px;font-size:7.0px;color:#111;width:12.70px;text-align:center;">6</div>
<div class="t" style="left:331.30px;top:417.60px;height:12px;line-height:12px;font-size:7.0px;color:#111;"><span class="c">核心</span></div>
<div style="left:363.10px;top:417.70px;width:12.70px;height:12.50px;background:#fafafa;border-top:0.8px solid #b8b8b8;border-left:0.8px solid #b8b8b8;border-right:0.9px solid #fff;border-bottom:0.9px solid #fff;"></div>
<div class="t" style="left:363.10px;top:418.00px;height:12px;line-height:12px;font-size:7.0px;color:#111;width:12.70px;text-align:center;">6</div>
<div class="t" style="left:377.80px;top:417.60px;height:12px;line-height:12px;font-size:7.0px;color:#111;"><span class="c">執行緒</span></div>
<div style="left:204.20px;top:436.40px;width:206.20px;height:86.60px;border:0.8px solid #dcdcdc;box-shadow:0.7px 0.7px 0 #fff, inset 0.7px 0.7px 0 #fff;"></div>
<div style="left:208.40px;top:431.40px;width:41.50px;height:10.00px;background:#f0f0f0;"></div>
<div class="t" style="left:209.30px;top:431.20px;height:12px;line-height:12px;font-size:7.0px;color:#111;"><span class="c">處理器資訊</span></div>
<div style="left:307.50px;top:431.00px;width:97.50px;height:10.00px;background:#f0f0f0;"></div>
<div class="t" style="left:309.00px;top:431.00px;height:12px;line-height:12px;font-size:7.4px;color:#0a64c8;text-decoration:underline;text-decoration-thickness:0.6px;text-underline-offset:1px;"><span class="c">檢查</span> Intel <span class="c">驅動程式有無更新</span></div>
<div class="t" style="right:482.40px;top:445.50px;height:12px;line-height:12px;font-size:7.0px;color:#111;"><span class="c">型號</span>:</div>
<div style="left:249.00px;top:445.80px;width:156.50px;height:11.20px;background:#f0f0f0;border-top:0.8px solid #b8b8b8;border-left:0.8px solid #b8b8b8;border-right:0.9px solid #fff;border-bottom:0.9px solid #fff;"></div>
<div class="t" style="left:251.20px;top:445.60px;height:12px;line-height:12px;font-size:7.0px;color:#111;letter-spacing:-0.022px;">Intel Core i5 8400 (Coffee Lake)</div>
<div class="t" style="right:482.40px;top:458.30px;height:12px;line-height:12px;font-size:7.0px;color:#111;"><span class="c">腳位</span>:</div>
<div style="left:249.00px;top:458.60px;width:156.50px;height:11.20px;background:#f0f0f0;border-top:0.8px solid #b8b8b8;border-left:0.8px solid #b8b8b8;border-right:0.9px solid #fff;border-bottom:0.9px solid #fff;"></div>
<div class="t" style="left:251.20px;top:458.40px;height:12px;line-height:12px;font-size:7.0px;color:#111;letter-spacing:-0.113px;">LGA 1151 (Socket H4)</div>
<div class="t" style="right:482.40px;top:471.10px;height:12px;line-height:12px;font-size:7.0px;color:#111;"><span class="c">頻率</span>:</div>
<div style="left:249.00px;top:471.40px;width:156.50px;height:11.20px;background:#f0f0f0;border-top:0.8px solid #b8b8b8;border-left:0.8px solid #b8b8b8;border-right:0.9px solid #fff;border-bottom:0.9px solid #fff;"></div>
<div class="t" style="left:251.20px;top:471.20px;height:12px;line-height:12px;font-size:7.0px;color:#111;letter-spacing:-0.025px;">3891.42MHz (99.78 x 39.0)</div>
<div class="t" style="right:482.40px;top:483.90px;height:12px;line-height:12px;font-size:7.0px;color:#111;"><span class="c">核心電壓</span>:</div>
<div style="left:249.00px;top:484.20px;width:43.90px;height:11.20px;background:#f0f0f0;border-top:0.8px solid #b8b8b8;border-left:0.8px solid #b8b8b8;border-right:0.9px solid #fff;border-bottom:0.9px solid #fff;"></div>
<div class="t" style="left:251.20px;top:484.00px;height:12px;line-height:12px;font-size:7.0px;color:#111;">1.0753 <span class="c">伏</span></div>
<div class="t" style="right:482.40px;top:496.70px;height:12px;line-height:12px;font-size:7.0px;color:#111;"><span class="c">步進</span>:</div>
<div style="left:249.00px;top:497.00px;width:43.90px;height:11.20px;background:#f0f0f0;border-top:0.8px solid #b8b8b8;border-left:0.8px solid #b8b8b8;border-right:0.9px solid #fff;border-bottom:0.9px solid #fff;"></div>
<div class="t" style="left:251.20px;top:496.80px;height:12px;line-height:12px;font-size:7.0px;color:#111;letter-spacing:-0.292px;">U0</div>
<div class="t" style="right:482.40px;top:509.50px;height:12px;line-height:12px;font-size:7.0px;color:#111;">CPUID:</div>
<div style="left:249.00px;top:509.80px;width:43.90px;height:11.20px;background:#f0f0f0;border-top:0.8px solid #b8b8b8;border-left:0.8px solid #b8b8b8;border-right:0.9px solid #fff;border-bottom:0.9px solid #fff;"></div>
<div class="t" style="left:251.20px;top:509.60px;height:12px;line-height:12px;font-size:7.0px;color:#111;letter-spacing:-0.239px;">0x906EA</div>
<div class="t" style="right:369.80px;top:483.90px;height:12px;line-height:12px;font-size:7.0px;color:#a4a4a4;"><span class="c">調變</span>:</div>
<div style="left:361.30px;top:484.20px;width:44.20px;height:11.20px;background:#f0f0f0;border-top:0.8px solid #b8b8b8;border-left:0.8px solid #b8b8b8;border-right:0.9px solid #fff;border-bottom:0.9px solid #fff;"></div>
<div class="t" style="right:369.80px;top:496.70px;height:12px;line-height:12px;font-size:7.0px;color:#111;"><span class="c">製程</span>:</div>
<div style="left:361.30px;top:497.00px;width:44.20px;height:11.20px;background:#f0f0f0;border-top:0.8px solid #b8b8b8;border-left:0.8px solid #b8b8b8;border-right:0.9px solid #fff;border-bottom:0.9px solid #fff;"></div>
<div class="t" style="left:363.50px;top:496.80px;height:12px;line-height:12px;font-size:7.0px;color:#111;">14 <span class="c">奈米</span></div>
<div class="t" style="right:369.80px;top:509.50px;height:12px;line-height:12px;font-size:7.0px;color:#111;"><span class="c">熱設計功耗</span>:</div>
<div style="left:361.30px;top:509.80px;width:44.20px;height:11.20px;background:#f0f0f0;border-top:0.8px solid #b8b8b8;border-left:0.8px solid #b8b8b8;border-right:0.9px solid #fff;border-bottom:0.9px solid #fff;"></div>
<div class="t" style="left:363.50px;top:509.60px;height:12px;line-height:12px;font-size:7.0px;color:#111;">65.0 <span class="c">瓦</span></div>
<div style="left:204.20px;top:532.40px;width:206.20px;height:115.00px;border:0.8px solid #dcdcdc;border-bottom:none;box-shadow:inset 0.7px 0.7px 0 #fff;"></div>
<div style="left:208.40px;top:527.40px;width:72.50px;height:10.00px;background:#f0f0f0;"></div>
<div class="t" style="left:209.20px;top:527.20px;height:12px;line-height:12px;font-size:7.0px;color:#111;"><span class="c">處理器</span> #0: <span class="c">溫度讀數</span></div>
<div class="t" style="right:482.40px;top:541.00px;height:12px;line-height:12px;font-size:7.0px;color:#111;"><span class="c">功率</span>:</div>
<div style="left:249.00px;top:541.30px;width:46.40px;height:11.20px;background:#f0f0f0;border-top:0.8px solid #b8b8b8;border-left:0.8px solid #b8b8b8;border-right:0.9px solid #fff;border-bottom:0.9px solid #fff;"></div>
<div class="t" style="left:251.20px;top:541.10px;height:12px;line-height:12px;font-size:7.0px;color:#111;">13.9W</div>
<div style="left:296.90px;top:541.30px;width:26.10px;height:11.20px;background:#f0f0f0;border-top:0.8px solid #b8b8b8;border-left:0.8px solid #b8b8b8;border-right:0.9px solid #fff;border-bottom:0.9px solid #fff;"></div>
<div class="t" style="left:296.90px;top:541.10px;height:12px;line-height:12px;font-size:7.0px;color:#111;width:26.10px;text-align:center;">2.8W</div>
<div style="left:324.40px;top:541.30px;width:25.90px;height:11.20px;background:#f0f0f0;border-top:0.8px solid #b8b8b8;border-left:0.8px solid #b8b8b8;border-right:0.9px solid #fff;border-bottom:0.9px solid #fff;"></div>
<div class="t" style="left:324.40px;top:541.10px;height:12px;line-height:12px;font-size:7.0px;color:#111;width:25.90px;text-align:center;">N/A</div>
<div style="left:351.90px;top:541.30px;width:25.60px;height:11.20px;background:#f0f0f0;border-top:0.8px solid #b8b8b8;border-left:0.8px solid #b8b8b8;border-right:0.9px solid #fff;border-bottom:0.9px solid #fff;"></div>
<div class="t" style="left:351.90px;top:541.10px;height:12px;line-height:12px;font-size:7.0px;color:#111;width:25.60px;text-align:center;">11.1W</div>
<div style="left:379.10px;top:541.30px;width:26.40px;height:11.20px;background:#f0f0f0;border-top:0.8px solid #b8b8b8;border-left:0.8px solid #b8b8b8;border-right:0.9px solid #fff;border-bottom:0.9px solid #fff;"></div>
<div class="t" style="left:379.10px;top:541.10px;height:12px;line-height:12px;font-size:7.0px;color:#111;width:26.40px;text-align:center;">N/A</div>
<div class="t" style="right:482.40px;top:553.83px;height:12px;line-height:12px;font-size:7.0px;color:#111;"><span class="c">耐熱</span>:</div>
<div style="left:249.00px;top:554.13px;width:74.00px;height:11.20px;background:#f0f0f0;border-top:0.8px solid #b8b8b8;border-left:0.8px solid #b8b8b8;border-right:0.9px solid #fff;border-bottom:0.9px solid #fff;"></div>
<div class="t" style="left:251.20px;top:553.93px;height:12px;line-height:12px;font-size:7.0px;color:#111;">100°C</div>
<div class="t" style="left:324.40px;top:553.83px;height:12px;line-height:12px;font-size:7.0px;color:#111;width:25.90px;text-align:center;"><span class="c">最低</span>.</div>
<div class="t" style="left:351.90px;top:553.83px;height:12px;line-height:12px;font-size:7.0px;color:#111;width:25.60px;text-align:center;"><span class="c">最高</span>.</div>
<div class="t" style="left:379.10px;top:553.83px;height:12px;line-height:12px;font-size:7.0px;color:#111;width:26.40px;text-align:center;"><span class="c">使用率</span></div>
<div class="t" style="right:482.40px;top:566.66px;height:12px;line-height:12px;font-size:7.0px;color:#111;"><span class="c">核心</span> #0:</div>
<div style="left:249.00px;top:566.96px;width:74.00px;height:11.20px;background:#f0f0f0;border-top:0.8px solid #b8b8b8;border-left:0.8px solid #b8b8b8;border-right:0.9px solid #fff;border-bottom:0.9px solid #fff;"></div>
<div class="t" style="left:251.20px;top:566.76px;height:12px;line-height:12px;font-size:7.0px;color:#111;">35°C</div>
<div style="left:324.40px;top:566.96px;width:25.90px;height:11.20px;background:#f0f0f0;border-top:0.8px solid #b8b8b8;border-left:0.8px solid #b8b8b8;border-right:0.9px solid #fff;border-bottom:0.9px solid #fff;"></div>
<div class="t" style="left:324.40px;top:566.76px;height:12px;line-height:12px;font-size:7.0px;color:#111;width:25.90px;text-align:center;">34°C</div>
<div style="left:351.90px;top:566.96px;width:25.60px;height:11.20px;background:#f0f0f0;border-top:0.8px solid #b8b8b8;border-left:0.8px solid #b8b8b8;border-right:0.9px solid #fff;border-bottom:0.9px solid #fff;"></div>
<div class="t" style="left:351.90px;top:566.76px;height:12px;line-height:12px;font-size:7.0px;color:#111;width:25.60px;text-align:center;">59°C</div>
<div style="left:379.10px;top:566.96px;width:26.40px;height:11.20px;background:#f0f0f0;border-top:0.8px solid #b8b8b8;border-left:0.8px solid #b8b8b8;border-right:0.9px solid #fff;border-bottom:0.9px solid #fff;"></div>
<div class="t" style="left:379.10px;top:566.76px;height:12px;line-height:12px;font-size:7.0px;color:#111;width:26.40px;text-align:center;">6%</div>
<div class="t" style="right:482.40px;top:579.49px;height:12px;line-height:12px;font-size:7.0px;color:#111;"><span class="c">核心</span> #1:</div>
<div style="left:249.00px;top:579.79px;width:74.00px;height:11.20px;background:#f0f0f0;border-top:0.8px solid #b8b8b8;border-left:0.8px solid #b8b8b8;border-right:0.9px solid #fff;border-bottom:0.9px solid #fff;"></div>
<div class="t" style="left:251.20px;top:579.59px;height:12px;line-height:12px;font-size:7.0px;color:#111;">36°C</div>
<div style="left:324.40px;top:579.79px;width:25.90px;height:11.20px;background:#f0f0f0;border-top:0.8px solid #b8b8b8;border-left:0.8px solid #b8b8b8;border-right:0.9px solid #fff;border-bottom:0.9px solid #fff;"></div>
<div class="t" style="left:324.40px;top:579.59px;height:12px;line-height:12px;font-size:7.0px;color:#111;width:25.90px;text-align:center;">36°C</div>
<div style="left:351.90px;top:579.79px;width:25.60px;height:11.20px;background:#f0f0f0;border-top:0.8px solid #b8b8b8;border-left:0.8px solid #b8b8b8;border-right:0.9px solid #fff;border-bottom:0.9px solid #fff;"></div>
<div class="t" style="left:351.90px;top:579.59px;height:12px;line-height:12px;font-size:7.0px;color:#111;width:25.60px;text-align:center;">59°C</div>
<div style="left:379.10px;top:579.79px;width:26.40px;height:11.20px;background:#f0f0f0;border-top:0.8px solid #b8b8b8;border-left:0.8px solid #b8b8b8;border-right:0.9px solid #fff;border-bottom:0.9px solid #fff;"></div>
<div class="t" style="left:379.10px;top:579.59px;height:12px;line-height:12px;font-size:7.0px;color:#111;width:26.40px;text-align:center;">0%</div>
<div class="t" style="right:482.40px;top:592.32px;height:12px;line-height:12px;font-size:7.0px;color:#111;"><span class="c">核心</span> #2:</div>
<div style="left:249.00px;top:592.62px;width:74.00px;height:11.20px;background:#f0f0f0;border-top:0.8px solid #b8b8b8;border-left:0.8px solid #b8b8b8;border-right:0.9px solid #fff;border-bottom:0.9px solid #fff;"></div>
<div class="t" style="left:251.20px;top:592.42px;height:12px;line-height:12px;font-size:7.0px;color:#111;">36°C</div>
<div style="left:324.40px;top:592.62px;width:25.90px;height:11.20px;background:#f0f0f0;border-top:0.8px solid #b8b8b8;border-left:0.8px solid #b8b8b8;border-right:0.9px solid #fff;border-bottom:0.9px solid #fff;"></div>
<div class="t" style="left:324.40px;top:592.42px;height:12px;line-height:12px;font-size:7.0px;color:#111;width:25.90px;text-align:center;">35°C</div>
<div style="left:351.90px;top:592.62px;width:25.60px;height:11.20px;background:#f0f0f0;border-top:0.8px solid #b8b8b8;border-left:0.8px solid #b8b8b8;border-right:0.9px solid #fff;border-bottom:0.9px solid #fff;"></div>
<div class="t" style="left:351.90px;top:592.42px;height:12px;line-height:12px;font-size:7.0px;color:#111;width:25.60px;text-align:center;">60°C</div>
<div style="left:379.10px;top:592.62px;width:26.40px;height:11.20px;background:#f0f0f0;border-top:0.8px solid #b8b8b8;border-left:0.8px solid #b8b8b8;border-right:0.9px solid #fff;border-bottom:0.9px solid #fff;"></div>
<div class="t" style="left:379.10px;top:592.42px;height:12px;line-height:12px;font-size:7.0px;color:#111;width:26.40px;text-align:center;">2%</div>
<div class="t" style="right:482.40px;top:605.15px;height:12px;line-height:12px;font-size:7.0px;color:#111;"><span class="c">核心</span> #3:</div>
<div style="left:249.00px;top:605.45px;width:74.00px;height:11.20px;background:#f0f0f0;border-top:0.8px solid #b8b8b8;border-left:0.8px solid #b8b8b8;border-right:0.9px solid #fff;border-bottom:0.9px solid #fff;"></div>
<div class="t" style="left:251.20px;top:605.25px;height:12px;line-height:12px;font-size:7.0px;color:#111;">35°C</div>
<div style="left:324.40px;top:605.45px;width:25.90px;height:11.20px;background:#f0f0f0;border-top:0.8px solid #b8b8b8;border-left:0.8px solid #b8b8b8;border-right:0.9px solid #fff;border-bottom:0.9px solid #fff;"></div>
<div class="t" style="left:324.40px;top:605.25px;height:12px;line-height:12px;font-size:7.0px;color:#111;width:25.90px;text-align:center;">34°C</div>
<div style="left:351.90px;top:605.45px;width:25.60px;height:11.20px;background:#f0f0f0;border-top:0.8px solid #b8b8b8;border-left:0.8px solid #b8b8b8;border-right:0.9px solid #fff;border-bottom:0.9px solid #fff;"></div>
<div class="t" style="left:351.90px;top:605.25px;height:12px;line-height:12px;font-size:7.0px;color:#111;width:25.60px;text-align:center;">59°C</div>
<div style="left:379.10px;top:605.45px;width:26.40px;height:11.20px;background:#f0f0f0;border-top:0.8px solid #b8b8b8;border-left:0.8px solid #b8b8b8;border-right:0.9px solid #fff;border-bottom:0.9px solid #fff;"></div>
<div class="t" style="left:379.10px;top:605.25px;height:12px;line-height:12px;font-size:7.0px;color:#111;width:26.40px;text-align:center;">0%</div>
<div class="t" style="right:482.40px;top:617.98px;height:12px;line-height:12px;font-size:7.0px;color:#111;"><span class="c">核心</span> #4:</div>
<div style="left:249.00px;top:618.28px;width:74.00px;height:11.20px;background:#f0f0f0;border-top:0.8px solid #b8b8b8;border-left:0.8px solid #b8b8b8;border-right:0.9px solid #fff;border-bottom:0.9px solid #fff;"></div>
<div class="t" style="left:251.20px;top:618.08px;height:12px;line-height:12px;font-size:7.0px;color:#111;">35°C</div>
<div style="left:324.40px;top:618.28px;width:25.90px;height:11.20px;background:#f0f0f0;border-top:0.8px solid #b8b8b8;border-left:0.8px solid #b8b8b8;border-right:0.9px solid #fff;border-bottom:0.9px solid #fff;"></div>
<div class="t" style="left:324.40px;top:618.08px;height:12px;line-height:12px;font-size:7.0px;color:#111;width:25.90px;text-align:center;">33°C</div>
<div style="left:351.90px;top:618.28px;width:25.60px;height:11.20px;background:#f0f0f0;border-top:0.8px solid #b8b8b8;border-left:0.8px solid #b8b8b8;border-right:0.9px solid #fff;border-bottom:0.9px solid #fff;"></div>
<div class="t" style="left:351.90px;top:618.08px;height:12px;line-height:12px;font-size:7.0px;color:#111;width:25.60px;text-align:center;">58°C</div>
<div style="left:379.10px;top:618.28px;width:26.40px;height:11.20px;background:#f0f0f0;border-top:0.8px solid #b8b8b8;border-left:0.8px solid #b8b8b8;border-right:0.9px solid #fff;border-bottom:0.9px solid #fff;"></div>
<div class="t" style="left:379.10px;top:618.08px;height:12px;line-height:12px;font-size:7.0px;color:#111;width:26.40px;text-align:center;">2%</div>
<div class="t" style="right:482.40px;top:630.81px;height:12px;line-height:12px;font-size:7.0px;color:#111;"><span class="c">核心</span> #5:</div>
<div style="left:249.00px;top:631.11px;width:74.00px;height:11.20px;background:#f0f0f0;border-top:0.8px solid #b8b8b8;border-left:0.8px solid #b8b8b8;border-right:0.9px solid #fff;border-bottom:0.9px solid #fff;"></div>
<div class="t" style="left:251.20px;top:630.91px;height:12px;line-height:12px;font-size:7.0px;color:#111;">33°C</div>
<div style="left:324.40px;top:631.11px;width:25.90px;height:11.20px;background:#f0f0f0;border-top:0.8px solid #b8b8b8;border-left:0.8px solid #b8b8b8;border-right:0.9px solid #fff;border-bottom:0.9px solid #fff;"></div>
<div class="t" style="left:324.40px;top:630.91px;height:12px;line-height:12px;font-size:7.0px;color:#111;width:25.90px;text-align:center;">33°C</div>
<div style="left:351.90px;top:631.11px;width:25.60px;height:11.20px;background:#f0f0f0;border-top:0.8px solid #b8b8b8;border-left:0.8px solid #b8b8b8;border-right:0.9px solid #fff;border-bottom:0.9px solid #fff;"></div>
<div class="t" style="left:351.90px;top:630.91px;height:12px;line-height:12px;font-size:7.0px;color:#111;width:25.60px;text-align:center;">57°C</div>
<div style="left:379.10px;top:631.11px;width:26.40px;height:11.20px;background:#f0f0f0;border-top:0.8px solid #b8b8b8;border-left:0.8px solid #b8b8b8;border-right:0.9px solid #fff;border-bottom:0.9px solid #fff;"></div>
<div class="t" style="left:379.10px;top:630.91px;height:12px;line-height:12px;font-size:7.0px;color:#111;width:26.40px;text-align:center;">2%</div>
</div>
</div>
</body></html>
